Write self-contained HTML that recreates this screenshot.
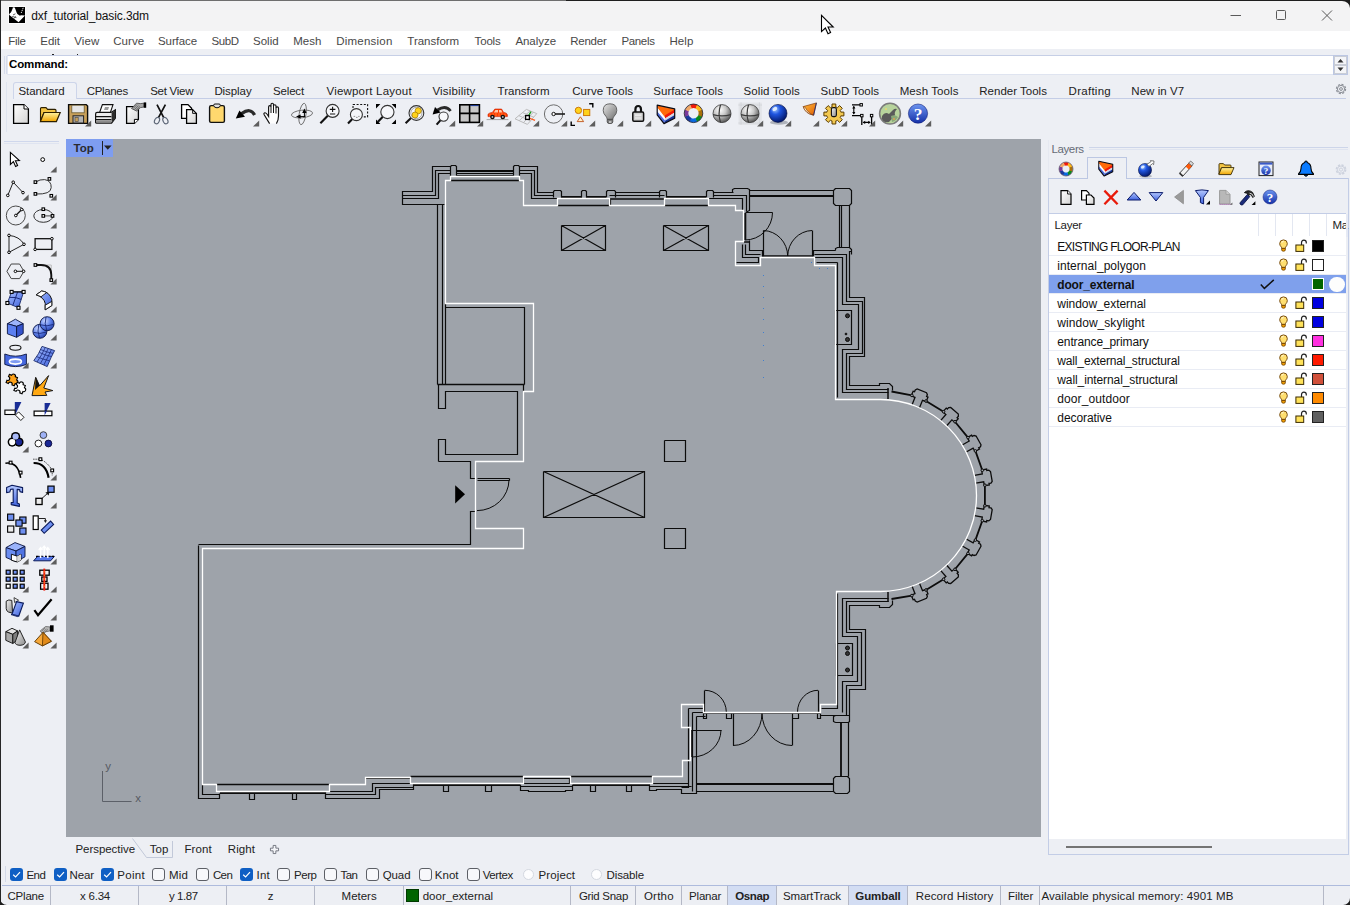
<!DOCTYPE html>
<html lang="en"><head><meta charset="utf-8"><title>dxf_tutorial_basic.3dm</title>
<style>
html,body{margin:0;padding:0;background:#fff;}
#app{position:relative;width:1351px;height:905px;overflow:hidden;background:#edeff4;font-family:"Liberation Sans",sans-serif;font-size:12.3px;color:#222;}
#app *{box-sizing:border-box;}
.a{position:absolute;}
.t{position:absolute;white-space:pre;line-height:16px;height:16px;}
.hl{position:absolute;height:1px;}
.vl{position:absolute;width:1px;}
svg{position:absolute;overflow:visible;}
.cb{position:absolute;width:13px;height:13px;border-radius:3px;top:868px;}
.cb.on{background:#0f5fc4;}
.cb.off{background:#f7f8fb;border:1px solid #5c5f66;}
.rd{position:absolute;width:11px;height:11px;border-radius:50%;top:869px;background:#fdfdfe;border:1px solid #d4d8e0;}
.sep{position:absolute;top:886px;width:1px;height:19px;background:#b4b8c6;}
.lrow{position:absolute;left:1049px;width:1297px;height:1px;background:#e9ecf4;}
.sw{position:absolute;left:1312px;width:12px;height:12px;border:1px solid #222;}

</style></head>
<body>
<div id="app">
<!-- window frame -->
<div class="a" style="left:0;top:0;width:1350px;height:31px;background:#f3f3f4;"></div>
<div class="a" style="left:0;top:31px;width:1350px;height:18px;background:#ffffff;"></div>
<!-- command area -->
<div class="a" style="left:7px;top:55px;width:1326px;height:20px;background:#fff;border:1px solid #c6cfe6;border-right:none;border-left-color:#e4e8f2;border-bottom-color:#dfe4f0;"></div><div class="vl" style="left:4px;top:56px;height:18px;background:#d6dcec;"></div><div class="vl" style="left:6px;top:56px;height:18px;background:#d6dcec;"></div><div class="a" style="left:52px;top:54px;width:2px;height:1px;background:#222;"></div><div class="a" style="left:77px;top:54px;width:1px;height:1px;background:#222;"></div>
<div class="a" style="left:1333px;top:55px;width:15px;height:20px;background:#fff;border:1px solid #bcc7e3;"></div>
<svg style="left:1334px;top:56px" width="13" height="18" viewBox="0 0 13 18"><rect x="0.5" y="0.5" width="12" height="8" fill="#f4f5f8" stroke="#c9cdd6"/><rect x="0.5" y="9.5" width="12" height="8" fill="#f4f5f8" stroke="#c9cdd6"/><path d="M3.5 6.5 L6.5 3 L9.5 6.5Z M3.5 11.5 L6.5 15 L9.5 11.5Z" fill="#333"/></svg>
<!-- toolbar tab strip -->
<div class="hl" style="left:76px;top:98px;width:1270px;background:#c4cde6;"></div>
<div class="a" style="left:13px;top:82px;width:64px;height:17px;border:1px solid #cdd5ea;border-bottom:none;border-radius:3px 3px 0 0;background:#eff1f6;"></div>
<div class="a" style="left:6px;top:82px;width:1px;height:50px;background:#dfe4ef;"></div>
<svg style="left:1334px;top:82px" width="14" height="14" viewBox="0 0 14 14"><circle cx="7" cy="7" r="4.6" fill="none" stroke="#8a8e96" stroke-width="1.1" stroke-dasharray="2.2 1.4"/><circle cx="7" cy="7" r="3.6" fill="none" stroke="#8a8e96" stroke-width="1"/><circle cx="7" cy="7" r="1.4" fill="none" stroke="#8a8e96" stroke-width="1"/></svg>
<!-- window controls -->
<svg style="left:1225px;top:5px" width="115" height="22" viewBox="0 0 115 22"><g stroke="#5a5a5a" stroke-width="1" fill="none"><path d="M5.5 10.5 H16"/><rect x="51.5" y="5.5" width="9" height="9" rx="1"/><path d="M97 5.5 L107 15.5 M107 5.5 L97 15.5"/></g></svg>
<!-- left toolbar separator -->
<div class="hl" style="left:4px;top:141px;width:55px;background:#cfd7ec;"></div>
<div class="hl" style="left:4px;top:143px;width:55px;background:#dfe4f1;"></div>
<!-- viewport -->
<div class="a" style="left:66px;top:139px;width:975px;height:698px;background:#9ea3aa;"></div>
<div class="a" style="left:66px;top:139px;width:47px;height:18px;background:#7e9df0;"></div>
<div class="a" style="left:102px;top:141px;width:1px;height:14px;background:#222;"></div>
<svg style="left:103px;top:145px" width="10" height="6" viewBox="0 0 10 6"><path d="M1 0.5 H8.6 L4.8 4.8Z" fill="#222"/></svg>
<!-- viewport tabs -->
<svg style="left:130px;top:838px" width="50" height="22" viewBox="0 0 50 22"><path d="M2.5 0.5 L16.5 19.5 H42.5 V3" fill="none" stroke="#c2c9d9" stroke-width="1"/></svg>
<svg style="left:270px;top:844.5px" width="9" height="9" viewBox="0 0 10 10"><path d="M3.5 0.5 H6.5 V3.5 H9.5 V6.5 H6.5 V9.5 H3.5 V6.5 H0.5 V3.5 H3.5Z" fill="#f4f5f8" stroke="#6a6e78" stroke-width="1"/></svg>
<!-- osnap row -->
<div class="a" style="left:5px;top:866px;width:1px;height:16px;background:#d3d9e8;"></div>
<div class="cb on" style="left:10px"><svg width="13" height="13" viewBox="0 0 13 13" style="left:0;top:0"><path d="M3.2 6.8 L5.6 9 L10 4.2" fill="none" stroke="#fff" stroke-width="1.2"/></svg></div>
<div class="cb on" style="left:54px"><svg width="13" height="13" viewBox="0 0 13 13" style="left:0;top:0"><path d="M3.2 6.8 L5.6 9 L10 4.2" fill="none" stroke="#fff" stroke-width="1.2"/></svg></div>
<div class="cb on" style="left:101px"><svg width="13" height="13" viewBox="0 0 13 13" style="left:0;top:0"><path d="M3.2 6.8 L5.6 9 L10 4.2" fill="none" stroke="#fff" stroke-width="1.2"/></svg></div>
<div class="cb off" style="left:152px"></div>
<div class="cb off" style="left:196px"></div>
<div class="cb on" style="left:240px"><svg width="13" height="13" viewBox="0 0 13 13" style="left:0;top:0"><path d="M3.2 6.8 L5.6 9 L10 4.2" fill="none" stroke="#fff" stroke-width="1.2"/></svg></div>
<div class="cb off" style="left:277px"></div>
<div class="cb off" style="left:324px"></div>
<div class="cb off" style="left:366px"></div>
<div class="cb off" style="left:418.5px"></div>
<div class="cb off" style="left:466.5px"></div>
<div class="rd" style="left:523px"></div>
<div class="rd" style="left:591px"></div>
<div class="hl" style="left:2px;top:885px;width:1348px;background:#aebbdd;"></div>
<div class="a" style="left:728px;top:886px;width:48px;height:19px;background:#d3ddf3;"></div>
<div class="a" style="left:849px;top:886px;width:58px;height:19px;background:#d3ddf3;"></div>
<div class="sep" style="left:50px"></div>
<div class="sep" style="left:138px"></div>
<div class="sep" style="left:226px"></div>
<div class="sep" style="left:314px"></div>
<div class="sep" style="left:403px"></div>
<div class="sep" style="left:570px"></div>
<div class="sep" style="left:635px"></div>
<div class="sep" style="left:681px"></div>
<div class="sep" style="left:727px"></div>
<div class="sep" style="left:776px"></div>
<div class="sep" style="left:848px"></div>
<div class="sep" style="left:907px"></div>
<div class="sep" style="left:1000px"></div>
<div class="sep" style="left:1039px"></div>
<div class="sep" style="left:1323px"></div>
<div class="a" style="left:406px;top:889px;width:13px;height:13px;background:#006400;border:1px solid #003a00;"></div>
<div class="vl" style="left:1048px;top:140px;height:38px;background:#e6e9f1;"></div><div class="vl" style="left:1048px;top:178px;height:677px;background:#c3cde6;"></div>
<div class="hl" style="left:1089px;top:147px;width:259px;background:#cdd5e9;"></div>
<div class="hl" style="left:1089px;top:149px;width:259px;background:#dfe4f0;"></div>
<div class="hl" style="left:1048px;top:178px;width:301px;background:#bcc7e3;"></div>
<div class="a" style="left:1087px;top:157px;width:40px;height:22px;border:1px solid #bcc7e3;border-bottom:none;background:#edeff4;"></div>
<div class="vl" style="left:1348px;top:178px;height:677px;background:#c3cde6;"></div>
<div class="hl" style="left:1048px;top:854px;width:301px;background:#c3cde6;"></div>
<div class="a" style="left:1049px;top:213px;width:297px;height:626px;background:#fff;border-top:1px solid #c3cde6;"></div>
<div class="vl" style="left:1258px;top:214px;height:22px;background:#e3e7f1;"></div>
<div class="vl" style="left:1275px;top:214px;height:22px;background:#e3e7f1;"></div>
<div class="vl" style="left:1292px;top:214px;height:22px;background:#e3e7f1;"></div>
<div class="vl" style="left:1309px;top:214px;height:22px;background:#e3e7f1;"></div>
<div class="vl" style="left:1326px;top:214px;height:22px;background:#e3e7f1;"></div>
<div class="lrow" style="top:255px;width:297px"></div>
<div class="lrow" style="top:274px;width:297px"></div>
<div class="lrow" style="top:293px;width:297px"></div>
<div class="lrow" style="top:312px;width:297px"></div>
<div class="lrow" style="top:331px;width:297px"></div>
<div class="lrow" style="top:350px;width:297px"></div>
<div class="lrow" style="top:369px;width:297px"></div>
<div class="lrow" style="top:388px;width:297px"></div>
<div class="lrow" style="top:407px;width:297px"></div>
<div class="lrow" style="top:426px;width:297px"></div>
<div class="a" style="left:1049px;top:275px;width:297px;height:18px;background:#7fa0ec;"></div>
<div class="a" style="left:1066px;top:846px;width:146px;height:2px;background:#747474;"></div>
<div class="sw" style="top:240px;background:#000000"></div>
<div class="sw" style="top:259px;background:#ffffff"></div>
<div class="sw" style="top:278px;background:#006400;border-color:#fff"></div>
<div class="sw" style="top:297px;background:#0000e0"></div>
<div class="sw" style="top:316px;background:#0000e0"></div>
<div class="sw" style="top:335px;background:#ff30e0"></div>
<div class="sw" style="top:354px;background:#ff1a00"></div>
<div class="sw" style="top:373px;background:#d0503a"></div>
<div class="sw" style="top:392px;background:#ff8a00"></div>
<div class="sw" style="top:411px;background:#606060"></div>
<div class="a" style="left:1329px;top:276.5px;width:15.5px;height:15.5px;border-radius:50%;background:#fdfdfd;"></div>
<svg style="left:1260px;top:279px" width="15" height="11" viewBox="0 0 15 11"><path d="M0.8 5.4 L4.4 9.4 L13.8 0.9" fill="none" stroke="#111" stroke-width="1.5"/></svg>
<div class="a" style="left:0;top:0;width:566px;height:1px;background:#6e6e6e;"></div><div class="a" style="left:566px;top:0;width:784px;height:1px;background:#1e1e1e;"></div>
<div class="a" style="left:0;top:0;width:1px;height:905px;background:#262626;"></div>
<svg style="left:1342px;top:0" width="8" height="8" viewBox="0 0 8 8"><path d="M0 0 H8 V8 A8 7 0 0 0 0 1 Z" fill="#1c1c1c"/></svg>
<svg style="left:1343px;top:898px" width="7" height="7" viewBox="0 0 7 7"><path d="M7 0 V7 H0 A7 7 0 0 0 7 0Z" fill="#1c1c1c"/></svg>
<svg style="left:0;top:898px" width="7" height="7" viewBox="0 0 7 7"><path d="M0 0 V7 H7 A7 7 0 0 1 0 0Z" fill="#1c1c1c"/></svg>
<div class="a" style="left:1350px;top:0;width:1px;height:905px;background:#fff;"></div>
<!-- app icon -->
<svg style="left:8px;top:6px" width="18" height="18" viewBox="0 0 18 18"><rect x="0.3" y="0.3" width="17.4" height="17.4" fill="#fff"/><rect x="1" y="1" width="16" height="16" fill="#000"/><path d="M1 8.8 L3.2 5 Q4.4 2.6 4.6 1.2 L6.8 1.4 L8.6 6.4 L9.4 8 L11.6 9.6 L13.4 9.2 L17 9.4 L10.6 16.2 Z" fill="#fff"/><path d="M4.4 1.2 Q3.6 5 2.2 6.8" fill="none" stroke="#000" stroke-width="0.9"/><path d="M5 9 L7.4 7.8 M4.2 10.4 L8.4 11.6 M6 12.6 L7.6 10.4" stroke="#333" stroke-width="0.8"/><path d="M15.2 1.8 L13.2 7" stroke="#fff" stroke-width="0.9" stroke-dasharray="1.4 0.8"/><path d="M11 8.6 Q12.6 9.4 13.4 7.6" fill="none" stroke="#000" stroke-width="0.9"/></svg>
<!-- mouse cursor -->
<svg style="left:818px;top:12px" width="20" height="26" viewBox="0 0 20 26"><path d="M3.5 3.4 V19.6 L7.4 16 L10 21.8 L12.6 20.6 L10 15 H15.2 Z" fill="#fff" stroke="#000" stroke-width="1.1" stroke-linejoin="miter"/></svg>

<svg id="plan" style="left:0;top:0" width="1351" height="905" viewBox="0 0 1351 905">
<path d="M102.5 771 V801.5 H131.6" fill="none" stroke="#5c6068" stroke-width="1"/>
<rect x="763" y="275" width="1" height="1" fill="#3f7fd0"/><rect x="763" y="286" width="1" height="1" fill="#3f7fd0"/><rect x="763" y="297" width="1" height="1" fill="#3f7fd0"/><rect x="763" y="308" width="1" height="1" fill="#3f7fd0"/><rect x="763" y="319" width="1" height="1" fill="#3f7fd0"/><rect x="763" y="332" width="1" height="1" fill="#3f7fd0"/><rect x="763" y="345" width="1" height="1" fill="#3f7fd0"/><rect x="763" y="360" width="1" height="1" fill="#3f7fd0"/><rect x="763" y="377" width="1" height="1" fill="#3f7fd0"/><rect x="811" y="262" width="1" height="1" fill="#3f7fd0"/><rect x="819" y="268" width="1" height="1" fill="#3f7fd0"/><rect x="827" y="268" width="1" height="1" fill="#3f7fd0"/>
<g fill="none" stroke="#0c0c0c" stroke-linejoin="miter">
<path stroke-width="1.2" d="M444.5 204.5 L402.5 204.5 L402.5 191.5 L432.5 191.5 L432.5 166.5 L450.5 166.5 M402.5 195.5 L435.5 195.5 L435.5 170.5 L450.5 170.5 M402.5 198.5 L438.5 198.5 L438.5 173.5 L450.5 173.5 M450.5 176.5 L450.5 166.5 L451.5 165.5 L455.5 165.5 L456.5 166.5 L456.5 176.5 M513.5 176.5 L513.5 166.5 L514.5 165.5 L518.5 165.5 L519.5 166.5 L519.5 176.5 M456.5 173.5 L513.5 173.5 M456.5 175.5 L513.5 175.5 M519.5 166.5 L537.5 166.5 L537.5 192.5 L553.5 192.5 M519.5 170.5 L534.5 170.5 L534.5 195.5 L553.5 195.5 M519.5 173.5 L531.5 173.5 L531.5 198.5 L557.5 198.5 M437.5 204.5 L437.5 384.5 M442.5 204.5 L442.5 384.5 M553.5 197.5 L553.5 191.5 L554.5 190.5 L560.5 190.5 L561.5 191.5 L561.5 197.5 M581.5 197.5 L581.5 191.5 L582.5 190.5 L585.5 190.5 L586.5 191.5 L586.5 197.5 M606.5 197.5 L606.5 191.5 L607.5 190.5 L614.5 190.5 L615.5 191.5 L615.5 197.5 M659.5 197.5 L659.5 191.5 L660.5 190.5 L665.5 190.5 L666.5 191.5 L666.5 197.5 M706.5 197.5 L706.5 191.5 L707.5 190.5 L712.5 190.5 L713.5 191.5 L713.5 197.5 M615.5 192.5 L659.5 192.5 M609.5 195.5 L664.5 195.5 M609.5 198.5 L609.5 205.5 M610.5 198.5 L610.5 205.5 M713.5 192.5 L733.5 192.5 M713.5 195.5 L746.5 195.5 L746.5 211.5 M708.5 198.5 L742.5 198.5 L742.5 210.5 M734.5 188.5 L747.5 188.5 L749.5 189.5 L749.5 210.5 L747.5 211.5 L746.5 211.5 M734.5 188.5 L732.5 189.5 L732.5 192.5 M749.5 190.5 L833.5 190.5 M835.5 188.5 L849.5 188.5 L851.5 190.5 L851.5 203.5 L849.5 205.5 L835.5 205.5 L833.5 203.5 L833.5 190.5 L835.5 188.5 M839.5 205.5 L839.5 247.5 M841.5 205.5 L841.5 247.5 M849.5 205.5 L849.5 247.5 M835.5 250.5 L835.5 248.5 L837.5 247.5 L849.5 247.5 L851.5 249.5 L851.5 254.5 M745.5 212.5 L772.5 212.5 M763.5 256.5 L763.5 230.5 M812.5 256.5 L812.5 230.5 M742.5 244.5 L742.5 257.5 L758.5 257.5 L758.5 262.5 L736.5 262.5 M745.5 244.5 L745.5 254.5 L760.5 254.5 M749.5 240.5 L749.5 250.5 L762.5 250.5 L762.5 256.5 M813.5 256.5 L813.5 250.5 L835.5 250.5 M851.5 251.5 L849.5 251.5 L849.5 297.5 L864.5 297.5 L864.5 356.5 L849.5 356.5 L849.5 385.5 L879.5 385.5 L879.5 383.5 L889.5 383.5 L892.5 386.5 L892.5 390.5 M814.5 254.5 L846.5 254.5 L846.5 301.5 L862.5 301.5 L862.5 353.5 L846.5 353.5 L846.5 389.5 L888.5 389.5 M814.5 257.5 L842.5 257.5 L842.5 304.5 L858.5 304.5 L858.5 349.5 L842.5 349.5 L842.5 392.5 L888.5 392.5 M837.5 262.5 L837.5 397.5 M837.5 262.5 L816.5 262.5 M835.5 310.5 L851.5 310.5 L851.5 344.5 L835.5 344.5 L835.5 310.5 M892.5 600.5 L892.5 604.5 L889.5 607.5 L879.5 607.5 L879.5 605.5 L849.5 605.5 L849.5 629.5 L865.5 629.5 L865.5 689.5 L849.5 689.5 L849.5 716.5 M888.5 601.5 L846.5 601.5 L846.5 632.5 L861.5 632.5 L861.5 685.5 L846.5 685.5 L846.5 715.5 L820.5 715.5 M888.5 598.5 L842.5 598.5 L842.5 636.5 L857.5 636.5 L857.5 681.5 L842.5 681.5 L842.5 712.5 M837.5 593.5 L837.5 708.5 L821.5 708.5 M836.5 643.5 L852.5 643.5 L852.5 675.5 L836.5 675.5 L836.5 643.5 M835.5 722.5 L833.5 721.5 L833.5 716.5 L835.5 715.5 L849.5 715.5 L849.5 721.5 L848.5 722.5 L835.5 722.5 M848.5 722.5 L848.5 776.5 M835.5 776.5 L847.5 776.5 L849.5 778.5 L849.5 791.5 L847.5 793.5 L835.5 793.5 L833.5 791.5 L833.5 778.5 L835.5 776.5 M696.5 791.5 L833.5 791.5 M688.5 708.5 L688.5 787.5 L681.5 787.5 M692.5 712.5 L692.5 791.5 M696.5 716.5 L696.5 793.5 L681.5 793.5 L681.5 790.5 M688.5 708.5 L703.5 708.5 M692.5 712.5 L703.5 712.5 M696.5 716.5 L705.5 716.5 M726.5 713.5 L726.5 718.5 L731.5 718.5 L731.5 713.5 M792.5 713.5 L792.5 718.5 L798.5 718.5 L798.5 713.5 M703.5 713.5 L703.5 718.5 L706.5 718.5 L706.5 713.5 M817.5 713.5 L817.5 718.5 L820.5 718.5 L820.5 713.5 M704.5 712.5 L704.5 690.5 M818.5 712.5 L818.5 690.5 M733.5 713.5 L733.5 745.5 M792.5 713.5 L792.5 745.5 M692.5 730.5 L721.5 730.5 M198.5 545.5 L198.5 798.5 L219.5 798.5 L219.5 793.5 M202.5 784.5 L202.5 794.5 L219.5 794.5 M249.5 793.5 L249.5 799.5 L254.5 799.5 L254.5 793.5 M292.5 793.5 L292.5 799.5 L296.5 799.5 L296.5 793.5 M329.5 791.5 L372.5 791.5 L372.5 783.5 L410.5 783.5 M325.5 791.5 L325.5 794.5 L375.5 794.5 L375.5 787.5 L413.5 787.5 M325.5 794.5 L325.5 798.5 L379.5 798.5 L379.5 789.5 L413.5 789.5 L413.5 784.5 M365.5 778.5 L410.5 778.5 M443.5 785.5 L443.5 791.5 L448.5 791.5 L448.5 785.5 M485.5 785.5 L485.5 791.5 L491.5 791.5 L491.5 785.5 M590.5 785.5 L590.5 791.5 L595.5 791.5 L595.5 785.5 M626.5 785.5 L626.5 791.5 L631.5 791.5 L631.5 785.5 M523.5 778.5 L569.5 778.5 L569.5 783.5 L523.5 783.5 L523.5 778.5 M520.5 784.5 L520.5 786.5 L572.5 786.5 L572.5 784.5 M520.5 786.5 L520.5 790.5 L528.5 790.5 L528.5 791.5 L565.5 791.5 L565.5 790.5 L572.5 790.5 L572.5 786.5 M652.5 783.5 L688.5 783.5 L688.5 776.5 M649.5 784.5 L649.5 786.5 L691.5 786.5 M649.5 786.5 L649.5 790.5 L656.5 790.5 L656.5 789.5 L681.5 789.5 L681.5 793.5 M198.5 544.5 L470.5 544.5 L470.5 511.5 L475.5 511.5 M438.5 461.5 L470.5 461.5 L470.5 478.5 L475.5 478.5 M477.5 478.5 L509.5 478.5 M477.5 480.5 L509.5 480.5 M509.5 478.5 L509.5 480.5 M445.5 303.5 L445.5 384.5 M445.5 307.5 L524.5 307.5 L524.5 384.5 M523.5 384.5 L523.5 391.5 M438.5 384.5 L438.5 408.5 L445.5 408.5 L445.5 391.5 L517.5 391.5 L517.5 454.5 L445.5 454.5 L445.5 439.5 L438.5 439.5 L438.5 461.5 M561.5 225.5 L605.5 225.5 L605.5 250.5 L561.5 250.5 L561.5 225.5 M561.5 225.5 L605.5 250.5 M561.5 250.5 L605.5 225.5 M663.5 225.5 L708.5 225.5 L708.5 250.5 L663.5 250.5 L663.5 225.5 M663.5 225.5 L708.5 250.5 M663.5 250.5 L708.5 225.5 M543.5 471.5 L644.5 471.5 L644.5 517.5 L543.5 517.5 L543.5 471.5 M543.5 471.5 L644.5 517.5 M543.5 517.5 L644.5 471.5 M664.5 440.5 L685.5 440.5 L685.5 461.5 L664.5 461.5 L664.5 440.5 M664.5 528.5 L685.5 528.5 L685.5 548.5 L664.5 548.5 L664.5 528.5"/>
<path stroke-width="2" d="M456 171 L514 171 M561 197 L582 197 M586 197 L606 197 M666 197 L706 197 M749 196 L834 196 M745.3 213 L745.3 240 M696 784 L833 784 M692 730 L692 757"/>
<path stroke-width="1.3" d="M450.5 180.5 L519.5 180.5 M557.5 205.5 L609.5 205.5 M664.5 205.5 L708.5 205.5 M216.5 784.5 L329.5 784.5 M410.5 776.5 L523.5 776.5 M570.5 776.5 L652.5 776.5 M437.5 384.5 L524.5 384.5 M919.5 407.7 L922.5 400.3 L926.2 401.7 L928 397.1 L926.6 396.5 L927.4 394.7 L926.5 392.7 L917.2 389 L915.3 389.9 L914.5 391.7 L913.1 391.2 L911.3 395.8 L915 397.3 L912.1 404.8 M946.7 425.8 L951.9 419.8 L954.9 422.4 L958.2 418.7 L957.1 417.7 L958.4 416.2 L958.3 414 L950.7 407.5 L948.6 407.6 L947.3 409.1 L946.2 408.1 L942.9 411.9 L945.9 414.5 L940.6 420.6 M966.2 452 L973.1 448.1 L975.1 451.5 L979.5 449.1 L978.7 447.8 L980.5 446.8 L981 444.8 L976.1 436 L974.1 435.5 L972.3 436.4 L971.6 435.1 L967.3 437.6 L969.2 441.1 L962.2 445 M975.8 483.1 L983.7 481.8 L984.3 485.7 L989.3 484.9 L989 483.4 L991 483.1 L992.2 481.3 L990.5 471.5 L988.8 470.2 L986.8 470.6 L986.6 469.1 L981.6 470 L982.3 473.9 L974.4 475.3 M974.4 515.7 L982.3 517.1 L981.6 521 L986.6 521.9 L986.8 520.4 L988.8 520.8 L990.5 519.5 L992.2 509.7 L991 507.9 L989 507.6 L989.3 506.1 L984.3 505.3 L983.7 509.2 L975.8 507.9 M962.2 546 L969.2 549.9 L967.3 553.4 L971.6 555.9 L972.3 554.6 L974.1 555.5 L976.1 555 L981 546.2 L980.5 544.2 L978.7 543.2 L979.5 541.9 L975.1 539.5 L973.1 542.9 L966.2 539 M940.6 570.4 L945.9 576.5 L942.9 579.1 L946.2 582.9 L947.3 581.9 L948.6 583.4 L950.7 583.5 L958.3 577 L958.4 574.8 L957.1 573.3 L958.2 572.3 L954.9 568.6 L951.9 571.2 L946.7 565.2 M912.1 586.2 L915 593.7 L911.3 595.2 L913.1 599.8 L914.5 599.3 L915.3 601.1 L917.2 602 L926.5 598.3 L927.4 596.3 L926.6 594.5 L928 593.9 L926.2 589.3 L922.5 590.7 L919.5 583.3"/>
<path stroke-width="1.6" d="M610 199 L664 199 M762 256 L813 256 M744 242 L750 242"/>
<path stroke-width="1.5" d="M888 388 L888 399 M888 592 L888 602 M703 713 L820 713"/>
<path stroke-width="1.8" d="M841 722 L841 776 M220 793 L326 793 M413 785 L520 785 M573 785 L650 785 M891.5 391.5 L911.9 395.4 M926 401 L943.6 411.7 M955 421.7 L968 437.6 M975.4 450.9 L982.3 470.3 M984.9 485.2 L984.9 505.8 M982.3 520.7 L975.4 540.1 M968 553.4 L955 569.3 M943.6 579.3 L926 590 M911.9 595.6 L891.5 599"/>
<g stroke-width="1"><path d="M772.5 212.5 A27.5 27.5 0 0 1 745 240" /><path d="M763.5 230.5 A25 26 0 0 1 787.7 256" /><path d="M812 230.5 A25 26 0 0 0 787.7 256" /><circle cx="847.5" cy="315.8" r="2" fill="#333"/><circle cx="847.5" cy="339.5" r="2" fill="#333"/><circle cx="846" cy="334" r="0.9" fill="#333"/><circle cx="847.5" cy="648" r="2" fill="#333"/><circle cx="847.5" cy="653.5" r="2" fill="#333"/><circle cx="847.5" cy="670" r="2" fill="#333"/><path d="M704.7 690.3 A21.6 21.7 0 0 1 726.3 712" /><path d="M818 690.3 A20.5 21.7 0 0 0 797.5 712" /><path d="M733 745.5 A29 32.5 0 0 0 762 713" /><path d="M792 745.5 A30 32.5 0 0 1 762 713" /><path d="M721 730 A28.8 27 0 0 1 692.2 757" /><path d="M509 480 A32 31 0 0 1 477 510.6" /><path d="M455.2 485.2 L455.2 503.5 L465 494.3Z" fill="#000" stroke="none"/><circle cx="926.0" cy="401.0" r="1.3" fill="#9ea3aa"/><circle cx="911.9" cy="395.4" r="1.3" fill="#9ea3aa"/><circle cx="955.0" cy="421.7" r="1.3" fill="#9ea3aa"/><circle cx="943.6" cy="411.7" r="1.3" fill="#9ea3aa"/><circle cx="975.4" cy="450.9" r="1.3" fill="#9ea3aa"/><circle cx="968.0" cy="437.6" r="1.3" fill="#9ea3aa"/><circle cx="984.9" cy="485.2" r="1.3" fill="#9ea3aa"/><circle cx="982.3" cy="470.3" r="1.3" fill="#9ea3aa"/><circle cx="982.3" cy="520.7" r="1.3" fill="#9ea3aa"/><circle cx="984.9" cy="505.8" r="1.3" fill="#9ea3aa"/><circle cx="968.0" cy="553.4" r="1.3" fill="#9ea3aa"/><circle cx="975.4" cy="540.1" r="1.3" fill="#9ea3aa"/><circle cx="943.6" cy="579.3" r="1.3" fill="#9ea3aa"/><circle cx="955.0" cy="569.3" r="1.3" fill="#9ea3aa"/><circle cx="911.9" cy="595.6" r="1.3" fill="#9ea3aa"/><circle cx="926.0" cy="590.0" r="1.3" fill="#9ea3aa"/></g>
</g>
<path d="M880.5 399.5 L835.5 399.5 L835.5 265.5 L814.5 265.5 L814.5 257.5 L760.5 257.5 L760.5 265.5 L735.5 265.5 L735.5 241.5 L743.5 241.5 L743.5 210.5 L735.5 210.5 L735.5 205.5 L708.5 205.5 L708.5 198.5 L664.5 198.5 L664.5 205.5 L609.5 205.5 L609.5 198.5 L557.5 198.5 L557.5 205.5 L523.5 205.5 L523.5 180.5 L519.5 180.5 L519.5 176.5 L450.5 176.5 L450.5 180.5 L445.5 180.5 L445.5 303.5 L533.5 303.5 L533.5 391.5 L523.5 391.5 L523.5 461.5 L475.5 461.5 L475.5 528.5 L523.5 528.5 L523.5 548.5 L202.5 548.5 L202.5 784.5 L216.5 784.5 L216.5 791.5 L329.5 791.5 L329.5 784.5 L365.5 784.5 L365.5 777.5 L410.5 777.5 L410.5 783.5 L523.5 783.5 L523.5 776.5 L570.5 776.5 L570.5 783.5 L652.5 783.5 L652.5 776.5 L682.5 776.5 L682.5 760.5 L690.5 760.5 L690.5 727.5 L681.5 727.5 L681.5 704.5 L703.5 704.5 L703.5 712.5 L820.5 712.5 L820.5 704.5 L836.5 704.5 L836.5 591.5 L880.5 591.5 A96 96 0 0 0 880.5 399.5" fill="none" stroke="#ffffff" stroke-width="1.3" stroke-linejoin="miter"/>
</svg>

<svg width="0" height="0" style="left:0;top:0"><defs>
<linearGradient id="gPage" x1="0" y1="0" x2="1" y2="1"><stop offset="0" stop-color="#ffffff"/><stop offset="1" stop-color="#d4d4d4"/></linearGradient>
<linearGradient id="gFold" x1="0" y1="0" x2="0" y2="1"><stop offset="0" stop-color="#fff3a0"/><stop offset="1" stop-color="#f0a400"/></linearGradient>
<radialGradient id="gGrey" cx="0.38" cy="0.3" r="0.75"><stop offset="0" stop-color="#ffffff"/><stop offset="0.45" stop-color="#c8c8c8"/><stop offset="1" stop-color="#4a4a4a"/></radialGradient>
<radialGradient id="gBlue" cx="0.35" cy="0.28" r="0.8"><stop offset="0" stop-color="#9cc4ff"/><stop offset="0.35" stop-color="#1f55e0"/><stop offset="1" stop-color="#00105a"/></radialGradient>
<radialGradient id="gBlue2" cx="0.35" cy="0.3" r="0.8"><stop offset="0" stop-color="#c8d6ff"/><stop offset="0.5" stop-color="#5f82ea"/><stop offset="1" stop-color="#2038a0"/></radialGradient>
<linearGradient id="gHelp" x1="0" y1="0" x2="0" y2="1"><stop offset="0" stop-color="#6d95f0"/><stop offset="1" stop-color="#1530a8"/></linearGradient>
<linearGradient id="gCone" x1="0" y1="0" x2="1" y2="1"><stop offset="0" stop-color="#ffc040"/><stop offset="1" stop-color="#e05a00"/></linearGradient>
<linearGradient id="gBulb" x1="0" y1="0" x2="1" y2="1"><stop offset="0" stop-color="#e6e6e6"/><stop offset="1" stop-color="#6e6e6e"/></linearGradient>
<linearGradient id="gBl" x1="0" y1="0" x2="1" y2="1"><stop offset="0" stop-color="#a9c0ff"/><stop offset="1" stop-color="#3b5fdc"/></linearGradient>
<linearGradient id="gBlV" x1="0" y1="0" x2="0" y2="1"><stop offset="0" stop-color="#b4c8ff"/><stop offset="1" stop-color="#3f62dd"/></linearGradient>
<linearGradient id="gGr" x1="0" y1="0" x2="1" y2="1"><stop offset="0" stop-color="#f4f4f4"/><stop offset="1" stop-color="#8c8c8c"/></linearGradient>
</defs></svg>
<svg style="left:9px;top:102px" width="28" height="26" viewBox="0 0 28 26"><path d="M4.6 2.6 H15 L19.4 7 V21.4 H4.6Z" fill="url(#gPage)" stroke="#000" stroke-width="1.3"/><path d="M15 2.6 V7 H19.4" fill="#fff" stroke="#000" stroke-width="1"/></svg>
<svg style="left:37px;top:102px" width="28" height="26" viewBox="0 0 28 26"><path d="M3.5 19 V6.6 Q3.5 5.6 4.5 5.6 H9 L10.6 7.4 H18 Q19 7.4 19 8.4 V10.5 H7Z" fill="#f3c544" stroke="#2d2000" stroke-width="1.1"/><path d="M3.4 19.6 L7 10.5 H23.2 L19.4 19.6Z" fill="url(#gFold)" stroke="#2d2000" stroke-width="1.2"/></svg>
<svg style="left:65px;top:102px" width="28" height="26" viewBox="0 0 28 26"><path d="M3.6 2.6 H21.2 L22.6 4 V21.4 H3.6Z" fill="#c8a05a" stroke="#0a0a0a" stroke-width="1.4"/><rect x="6.8" y="3.2" width="12.4" height="7.6" fill="#e6e6e6" stroke="#6a5a30" stroke-width="0.8"/><rect x="8" y="13.8" width="10.6" height="7.2" fill="#b4b4b4" stroke="#222" stroke-width="1"/><rect x="10" y="15.4" width="3.2" height="4.2" fill="#c8a05a" stroke="#444" stroke-width="0.6"/><path d="M20 24.6 L26.2 18.4 V24.6Z" fill="#5e5e5e"/></svg>
<svg style="left:93px;top:102px" width="28" height="26" viewBox="0 0 28 26"><path d="M6.6 10.5 L9.4 2.6 H20 L17.4 10.5Z" fill="#fdfdfd" stroke="#111" stroke-width="1.1"/><path d="M12 5 h4 l-1 3 h-4z" fill="#9a9a9a"/><path d="M2.6 12 Q2.6 10.4 4.2 10.4 H18 L22.4 7.8 V16 L18.6 21.2 H3.4 Q2.6 21.2 2.6 20.2Z" fill="#ececec" stroke="#111" stroke-width="1.2"/><path d="M18.6 10.8 L22.4 8 V16 L18.6 21Z" fill="#2c2c2c"/><path d="M2.8 14.6 H18.4 M2.8 17.6 H18.4" stroke="#111" stroke-width="1.2"/><path d="M3.2 19.2 H18.2" stroke="#8c8c8c" stroke-width="1.6"/></svg>
<svg style="left:121px;top:102px" width="28" height="26" viewBox="0 0 28 26"><path d="M5.6 4.6 H17.4 V17.4 L13.4 21.4 H5.6Z" fill="url(#gPage)" stroke="#000" stroke-width="1.3"/><path d="M13.4 21.4 V17.4 H17.4" fill="#fff" stroke="#000" stroke-width="1"/><path d="M10.5 6.5 L15.5 1.2 L19.5 1.6 L23 1.2 V5 L19.5 5.6 L15.5 9Z" fill="#a8a8a8" stroke="#444" stroke-width="0.8"/><path d="M12 6.6 L16 2.6 M13.5 7.6 L17.5 3.6 M15 8.2 L19 4.4" stroke="#555" stroke-width="0.7"/><rect x="22.8" y="0.4" width="2.4" height="5.4" fill="#000"/></svg>
<svg style="left:149px;top:102px" width="28" height="26" viewBox="0 0 28 26"><path d="M8 2.6 L14.6 15.4 M16.4 2.6 L9.6 15.4" stroke="#111" stroke-width="1.7" fill="none"/><ellipse cx="8" cy="18.6" rx="2.3" ry="3.4" transform="rotate(28 8 18.6)" fill="none" stroke="#5a6474" stroke-width="1.1"/><ellipse cx="16.4" cy="18.6" rx="2.3" ry="3.4" transform="rotate(-28 16.4 18.6)" fill="none" stroke="#5a6474" stroke-width="1.1"/></svg>
<svg style="left:177px;top:102px" width="28" height="26" viewBox="0 0 28 26"><path d="M4.6 2.6 H11 L14.6 6.2 V16.4 H4.6Z" fill="#fff" stroke="#000" stroke-width="1.3"/><path d="M9.6 7.6 H15.6 L19.4 11.4 V21.4 H9.6Z" fill="url(#gPage)" stroke="#000" stroke-width="1.3"/><path d="M15.6 7.6 V11.4 H19.4" fill="none" stroke="#000" stroke-width="0.9"/></svg>
<svg style="left:205px;top:102px" width="28" height="26" viewBox="0 0 28 26"><path d="M6.2 3.6 H17.8 Q19.4 3.6 19.4 5.2 V19 Q19.4 20.4 18 20.4 H6 Q4.6 20.4 4.6 19 V5.2 Q4.6 3.6 6.2 3.6Z" fill="#ffd86e" stroke="#111" stroke-width="1.4"/><path d="M8.6 3.4 Q8.6 2 10 2 H14 Q15.4 2 15.4 3.4 Q15 5.8 12 5.8 Q9 5.8 8.6 3.4Z" fill="#e2e2e2" stroke="#111" stroke-width="1"/></svg>
<svg style="left:233px;top:102px" width="28" height="26" viewBox="0 0 28 26"><path d="M21.6 13 Q17.5 5.2 8.6 11.6" fill="none" stroke="#2a2a2a" stroke-width="3.2"/><path d="M2.8 16.6 L6.4 8.4 L12 14.8Z" fill="#000"/><path d="M20 24.6 L26.2 18.4 V24.6Z" fill="#5e5e5e"/></svg>
<svg style="left:261px;top:102px" width="28" height="26" viewBox="0 0 28 26"><path d="M8.6 21.6 L3.2 12.8 Q2.4 11.2 3.8 10.8 Q5.2 10.6 7.6 14.4 V5 Q7.6 3.6 8.8 3.6 Q10 3.6 10 5 V2.6 Q10 1.2 11.25 1.2 Q12.5 1.2 12.5 2.6 V4 Q12.5 2.7 13.75 2.7 Q15 2.7 15 4 V6 Q15 4.8 16.25 4.8 Q17.5 4.8 17.5 6 V14 Q17.5 18.5 15.4 21.6" fill="#fdfdfd" stroke="#111" stroke-width="1.15"/><path d="M10 5 V11 M12.5 4 V11 M15 6 V11.5" stroke="#111" stroke-width="1"/></svg>
<svg style="left:289px;top:102px" width="28" height="26" viewBox="0 0 28 26"><ellipse cx="13" cy="12" rx="10.6" ry="3.8" transform="rotate(-6 13 12)" fill="none" stroke="#6a6a6a" stroke-width="0.9"/><ellipse cx="13.6" cy="12" rx="3.4" ry="10.8" transform="rotate(9 13.6 12)" fill="none" stroke="#6a6a6a" stroke-width="0.9"/><path d="M15.4 6.6 L17.6 11 H13.2Z M7 14.6 L11.6 12.4 V16.8Z" fill="#000"/><path d="M15.4 10 V15 M10 14.6 H16" stroke="#000" stroke-width="1"/></svg>
<svg style="left:317px;top:102px" width="28" height="26" viewBox="0 0 28 26"><path d="M11.0 13.5 L3.4 21.2" stroke="#111" stroke-width="2.1" fill="none"/><circle cx="15.6" cy="8.9" r="6.5" fill="#f6f7fa" stroke="#333" stroke-width="1.1"/><path d="M12.8 7.4 H18.4 M15.6 4.8 V10 M13 12 H18.2" stroke="#111" stroke-width="1.1"/></svg>
<svg style="left:345px;top:102px" width="28" height="26" viewBox="0 0 28 26"><rect x="8" y="2.5" width="14.6" height="12.4" fill="none" stroke="#111" stroke-width="1.1" stroke-dasharray="2 1.6"/><path d="M7.3 16.9 L3 21.4" stroke="#111" stroke-width="2.1" fill="none"/><circle cx="11.4" cy="12.6" r="6" fill="#f6f7fa" stroke="#333" stroke-width="1.1"/><path d="M8.6 14.4 h1.6 M11 15.4 h1.6 M13.2 14.4 h1.4" stroke="#888" stroke-width="0.9"/></svg>
<svg style="left:373px;top:102px" width="28" height="26" viewBox="0 0 28 26"><path d="M3 2 H7.4 L3 6.4Z M23 2 H18.6 L23 6.4Z M3 22 H7.4 L3 17.6Z M23 22 H18.6 L23 17.6Z" fill="#000"/><path d="M9.8 14.8 L5 19.8" stroke="#111" stroke-width="2.1" fill="none"/><circle cx="14.4" cy="10" r="6.6" fill="#f6f7fa" stroke="#333" stroke-width="1.1"/></svg>
<svg style="left:401px;top:102px" width="28" height="26" viewBox="0 0 28 26"><path d="M10.0 16.1 L4.6 21.2" stroke="#111" stroke-width="2.1" fill="none"/><circle cx="15.4" cy="11" r="7.4" fill="#f6f7fa" stroke="#333" stroke-width="1.1"/><circle cx="15.4" cy="11" r="5.6" fill="none" stroke="#888" stroke-width="0.7"/><circle cx="17.2" cy="8.8" r="3.1" fill="#ffd21a" stroke="#a07800" stroke-width="0.7"/><circle cx="14" cy="13" r="3" fill="#ffd21a" stroke="#a07800" stroke-width="0.7"/></svg>
<svg style="left:429px;top:102px" width="28" height="26" viewBox="0 0 28 26"><path d="M21.6 9 Q16.5 2.4 8.6 8" fill="none" stroke="#2a2a2a" stroke-width="2.8"/><path d="M3.6 12.6 L6 5 L11.6 10.4Z" fill="#000"/><path d="M11.6 18.1 L7.6 22.6" stroke="#111" stroke-width="2.1" fill="none"/><circle cx="14.6" cy="14.6" r="4.6" fill="#f6f7fa" stroke="#333" stroke-width="1.1"/><path d="M20 24.6 L26.2 18.4 V24.6Z" fill="#5e5e5e"/></svg>
<svg style="left:457px;top:102px" width="28" height="26" viewBox="0 0 28 26"><rect x="2.8" y="2.8" width="19.6" height="17.6" fill="#c6c6c6" stroke="#000" stroke-width="1.6"/><path d="M12.6 2.8 V20.4 M2.8 11.4 H22.4" stroke="#000" stroke-width="1.6"/><path d="M13.4 3.6 h8.2" stroke="#1a3a9a" stroke-width="1"/><path d="M20 24.6 L26.2 18.4 V24.6Z" fill="#5e5e5e"/></svg>
<svg style="left:485px;top:102px" width="28" height="26" viewBox="0 0 28 26"><path d="M1.6 17.6 H23.4" stroke="#a6a6a6" stroke-width="1"/><path d="M3 14.6 V12.2 Q4.4 10.6 7.4 10.4 L9.8 7 H16.6 L18.6 10.4 Q22 10.8 22.4 12.8 V14.6Z" fill="#ff3c00" stroke="#c81e00" stroke-width="0.6"/><path d="M10.4 8 H13 V10.4 H8.8Z M14 8 H16.2 L17.4 10.4 H14Z" fill="#ffc9a8"/><path d="M5 11.4 v3 M8 11 v3.4 M11 11 v3.4 M14 11 v3.4 M17 11 v3.4 M20 11.4 v3" stroke="#ff8a3a" stroke-width="0.8"/><circle cx="7.4" cy="15" r="2.3" fill="#111"/><circle cx="17.8" cy="15" r="2.3" fill="#111"/><circle cx="7.4" cy="15" r="0.9" fill="#bbb"/><circle cx="17.8" cy="15" r="0.9" fill="#bbb"/><path d="M20 24.6 L26.2 18.4 V24.6Z" fill="#5e5e5e"/></svg>
<svg style="left:513px;top:102px" width="28" height="26" viewBox="0 0 28 26"><g stroke="#b4b4b4" stroke-width="0.9" fill="none"><path d="M2 16.8 L13.4 7.4 L23.8 11.6 L14.4 22.4Z"/><path d="M5.8 13.6 L17.6 19 M9.6 10.6 L20.8 15.2 M6.2 18.6 L17 9 M10.4 20.6 L20.4 10.2"/></g><path d="M15 14.6 L18 9.6" stroke="#1a9a1a" stroke-width="1.3"/><path d="M16 16 L22 18.4" stroke="#ff5a1a" stroke-width="1.3"/><rect x="12.6" y="13.6" width="3.8" height="3.8" fill="#fff" stroke="#000" stroke-width="1.3"/><path d="M20 24.6 L26.2 18.4 V24.6Z" fill="#5e5e5e"/></svg>
<svg style="left:541px;top:102px" width="28" height="26" viewBox="0 0 28 26"><circle cx="12.6" cy="12" r="9.2" fill="none" stroke="#6e6e6e" stroke-width="1"/><path d="M13 12 H24" stroke="#111" stroke-width="1.5"/><circle cx="12.6" cy="12" r="1.7" fill="#fff" stroke="#111" stroke-width="1"/><path d="M20 24.6 L26.2 18.4 V24.6Z" fill="#5e5e5e"/></svg>
<svg style="left:569px;top:102px" width="28" height="26" viewBox="0 0 28 26"><path d="M20.2 1.8 H23.8 V5.6 M2.2 19.4 V23.4 H6" fill="none" stroke="#000" stroke-width="1.4"/><circle cx="9.4" cy="8.4" r="3.2" fill="#ffd21a" stroke="#c87000" stroke-width="0.9"/><rect x="14.6" y="7.4" width="6.2" height="6.2" fill="#ffd21a" stroke="#c87000" stroke-width="0.9"/><path d="M11.4 14.8 L14.6 19.6 H8.2Z" fill="#fff4cc" stroke="#c0501a" stroke-width="0.9"/><path d="M20 24.6 L26.2 18.4 V24.6Z" fill="#5e5e5e"/></svg>
<svg style="left:597px;top:102px" width="28" height="26" viewBox="0 0 28 26"><path d="M13 1.8 Q19.8 1.8 19.8 8.4 Q19.8 11.6 17 14.4 Q15.8 15.8 15.8 17.4 H10.2 Q10.2 15.8 9 14.4 Q6.2 11.6 6.2 8.4 Q6.2 1.8 13 1.8Z" fill="url(#gBulb)" stroke="#5a5a5a" stroke-width="0.9"/><path d="M10.2 17.4 H15.8 V20 Q15.8 21.6 13 21.6 Q10.2 21.6 10.2 20Z" fill="#7a7a7a" stroke="#444" stroke-width="0.8"/><path d="M12 20 h2.4" stroke="#eee" stroke-width="1.2"/><path d="M20 24.6 L26.2 18.4 V24.6Z" fill="#5e5e5e"/></svg>
<svg style="left:625px;top:102px" width="28" height="26" viewBox="0 0 28 26"><path d="M10.4 10 V7.4 Q10.4 4 13.2 4 Q16 4 16 7.4 V10" fill="none" stroke="#111" stroke-width="2.2"/><rect x="7.8" y="10" width="10.8" height="9.2" rx="1.2" fill="#cfcfcf" stroke="#111" stroke-width="1.5"/><path d="M10 13.2 h6.4 M10 16 h6.4" stroke="#f2f2f2" stroke-width="1.2"/><path d="M20 24.6 L26.2 18.4 V24.6Z" fill="#5e5e5e"/></svg>
<svg style="left:653px;top:102px" width="28" height="26" viewBox="0 0 28 26"><path d="M4.2 3.2 L21.7 6.9 V9 L12 15.5 L4.2 5.5Z" fill="#ff6a0a"/><path d="M12 13.2 L21.7 7.4 V10.6 L12 16.6Z" fill="#f01a0a"/><path d="M4.2 5.5 L12 15.8 V18.4 L4.2 9.4Z" fill="#fbfbff"/><path d="M4.2 9.4 L12 18.4 L11 21.6 L4.2 12.9Z" fill="#4a6ade"/><path d="M12 16.6 L21.7 10.6 V13 L12 18.8Z" fill="#d4d8e6"/><path d="M12 18.8 L21.7 13 V16.2 L11 21.6Z" fill="#16349a"/><path d="M4.2 3.2 L21.7 6.9 V16.2 L11 21.6 L4.2 12.9Z" fill="none" stroke="#0a0a14" stroke-width="1.2" stroke-linejoin="round"/><path d="M20 24.6 L26.2 18.4 V24.6Z" fill="#5e5e5e"/></svg>
<svg style="left:681px;top:102px" width="28" height="26" viewBox="0 0 28 26"><path d="M9.74 4.65 A7.2 7.2 0 0 1 15.58 4.79" stroke="#f01a0a" stroke-width="4" fill="none"/><path d="M15.26 4.65 A7.2 7.2 0 0 1 19.28 8.88" stroke="#ffb81a" stroke-width="4" fill="none"/><path d="M19.15 8.54 A7.2 7.2 0 0 1 19.01 14.38" stroke="#a8700a" stroke-width="4" fill="none"/><path d="M19.15 14.06 A7.2 7.2 0 0 1 14.92 18.08" stroke="#0a8a1a" stroke-width="4" fill="none"/><path d="M15.26 17.95 A7.2 7.2 0 0 1 9.42 17.81" stroke="#0a6ae0" stroke-width="4" fill="none"/><path d="M9.74 17.95 A7.2 7.2 0 0 1 5.72 13.72" stroke="#1a3aa0" stroke-width="4" fill="none"/><path d="M5.85 14.06 A7.2 7.2 0 0 1 5.99 8.22" stroke="#7a3a9a" stroke-width="4" fill="none"/><path d="M5.85 8.54 A7.2 7.2 0 0 1 10.08 4.52" stroke="#f0a868" stroke-width="4" fill="none"/><circle cx="12.5" cy="11.3" r="9.3" fill="none" stroke="#1a1a2a" stroke-width="0.8"/><path d="M20 24.6 L26.2 18.4 V24.6Z" fill="#5e5e5e"/></svg>
<svg style="left:709px;top:102px" width="28" height="26" viewBox="0 0 28 26"><circle cx="13" cy="11.6" r="9" fill="url(#gGrey)" stroke="#3a3a3a" stroke-width="0.8"/><path d="M4 12.6 Q13 15 22 12.6 M11.6 2.8 Q8.6 11.6 11.6 20.6" fill="none" stroke="#3c3c3c" stroke-width="1.2"/></svg>
<svg style="left:737px;top:102px" width="28" height="26" viewBox="0 0 28 26"><rect x="1.6" y="0.6" width="23.2" height="22.4" fill="#e2e4e8"/><path d="M1.6 3 H24.8 M1.6 21 H24.8 M4 0.6 V23 M22.4 0.6 V23" stroke="#c4c6cc" stroke-width="0.8" stroke-dasharray="1 1"/><circle cx="13" cy="11.6" r="9" fill="url(#gGrey)" stroke="#3a3a3a" stroke-width="0.8"/><path d="M4 12.6 Q13 15 22 12.6 M11.6 2.8 Q8.6 11.6 11.6 20.6" fill="none" stroke="#3c3c3c" stroke-width="1.2"/><path d="M20 24.6 L26.2 18.4 V24.6Z" fill="#5e5e5e"/></svg>
<svg style="left:765px;top:102px" width="28" height="26" viewBox="0 0 28 26"><ellipse cx="14" cy="20.4" rx="9" ry="2.4" fill="#b0b4bc"/><circle cx="13" cy="11.4" r="9" fill="url(#gBlue)" stroke="#000a3a" stroke-width="0.6"/><ellipse cx="9.8" cy="7" rx="2.6" ry="1.8" transform="rotate(-30 9.8 7)" fill="#e8f2ff" opacity="0.9"/><path d="M20 24.6 L26.2 18.4 V24.6Z" fill="#5e5e5e"/></svg>
<svg style="left:793px;top:102px" width="28" height="26" viewBox="0 0 28 26"><g transform="translate(2.2 -0.4) scale(0.93)"><path d="M22.8 1.4 L8.6 5.4 Q11 13 19.8 14.6Z" fill="url(#gCone)" stroke="#7a3000" stroke-width="0.7"/><path d="M8.6 5.4 Q11 13 19.8 14.6 Q14 12.6 10.6 6Z" fill="#ffe8c0" stroke="#7a3000" stroke-width="0.6"/><path d="M22.8 1.4 L19.8 14.6" stroke="#1a2a7a" stroke-width="0.9"/></g><path d="M20 24.6 L26.2 18.4 V24.6Z" fill="#5e5e5e"/></svg>
<svg style="left:821px;top:102px" width="28" height="26" viewBox="0 0 28 26"><path d="M19.8 10.1 L22.9 10.1 L22.9 13.9 L19.8 13.9 L19.6 14.8 L19.2 15.5 L21.3 17.7 L18.6 20.4 L16.4 18.3 L15.7 18.7 L14.8 18.9 L14.8 22.0 L11.0 22.0 L11.0 18.9 L10.1 18.7 L9.4 18.3 L7.2 20.4 L4.5 17.7 L6.6 15.5 L6.2 14.8 L6.0 13.9 L2.9 13.9 L2.9 10.1 L6.0 10.1 L6.2 9.2 L6.6 8.5 L4.5 6.3 L7.2 3.6 L9.4 5.7 L10.1 5.3 L11.0 5.1 L11.0 2.0 L14.8 2.0 L14.8 5.1 L15.7 5.3 L16.4 5.7 L18.6 3.6 L21.3 6.3 L19.2 8.5 L19.6 9.2Z" fill="#f2c850" stroke="#5a3c00" stroke-width="1" stroke-linejoin="round"/><rect x="10.4" y="5.6" width="5" height="9" rx="1.6" fill="url(#gGr)" stroke="#111" stroke-width="1.1"/><path d="M20 24.6 L26.2 18.4 V24.6Z" fill="#5e5e5e"/></svg>
<svg style="left:849px;top:102px" width="28" height="26" viewBox="0 0 28 26"><g stroke="#000" stroke-width="1.3" fill="none"><path d="M3 2.8 H11 M3 13.6 H11.6 M12.8 15 V23 M22.6 15 V23"/><path d="M4.8 4.6 V11.8 M14.4 20.4 H21" stroke-width="1.1"/></g><path d="M4.8 3.8 L6.4 6.4 H3.2Z M4.8 12.6 L6.4 10 H3.2Z M13.6 20.4 L16.2 18.8 V22Z M21.8 20.4 L19.2 18.8 V22Z" fill="#000"/><g fill="#fff" stroke="#000" stroke-width="1"><rect x="11" y="1.6" width="2.4" height="2.4"/><rect x="11.6" y="12.4" width="2.4" height="2.4"/><rect x="21.4" y="12.4" width="2.4" height="2.4"/></g><path d="M20 24.6 L26.2 18.4 V24.6Z" fill="#5e5e5e"/></svg>
<svg style="left:877px;top:102px" width="28" height="26" viewBox="0 0 28 26"><circle cx="13" cy="11.6" r="10.4" fill="#b7d39c" stroke="#7c7c7c" stroke-width="1.6"/><path d="M5 14 Q8 9 12 12 L16 8 Q18 6 20 7 Q17 10 18 13 Q15 17 12 20 Q7 21 5 17Z" fill="#5a5a5a"/><path d="M14 14 Q18 12 21 15 Q19 19 15 20Z" fill="#8aa878"/><circle cx="9" cy="7" r="1" fill="#e8d870"/><circle cx="17" cy="17" r="0.9" fill="#e8a050"/><path d="M20 24.6 L26.2 18.4 V24.6Z" fill="#5e5e5e"/></svg>
<svg style="left:905px;top:102px" width="28" height="26" viewBox="0 0 28 26"><circle cx="13" cy="11.6" r="9.6" fill="url(#gHelp)" stroke="#10207a" stroke-width="0.6"/><text x="13" y="17.6" text-anchor="middle" font-family="Liberation Serif, serif" font-weight="700" font-size="17.5" fill="#fff">?</text><path d="M20 24.6 L26.2 18.4 V24.6Z" fill="#5e5e5e"/></svg>
<svg style="left:3.5px;top:148.2px" width="26" height="26" viewBox="0 0 26 26"><path d="M6.4 4.4 V16.4 L9.4 13.6 L11.6 18.4 L13.6 17.4 L11.4 12.8 L15.4 12.6Z" fill="#fff" stroke="#000" stroke-width="1.1" stroke-linejoin="miter"/></svg>
<svg style="left:31.5px;top:148.2px" width="26" height="26" viewBox="0 0 26 26"><circle cx="10.7" cy="11.6" r="1.9" fill="#fff" stroke="#000" stroke-width="1"/><path d="M18.4 24.6 L24.6 18.4 V24.6Z" fill="#5e5e5e"/></svg>
<svg style="left:3.5px;top:176.2px" width="26" height="26" viewBox="0 0 26 26"><path d="M3.8 19.4 L9.2 6.2 L19 16.6" fill="none" stroke="#222" stroke-width="1"/><circle cx="3.8" cy="19.4" r="1.3" fill="#fff" stroke="#000" stroke-width="1"/><circle cx="9.2" cy="6.2" r="1.3" fill="#fff" stroke="#000" stroke-width="1"/><circle cx="19" cy="16.6" r="1.3" fill="#fff" stroke="#000" stroke-width="1"/><path d="M18.4 24.6 L24.6 18.4 V24.6Z" fill="#5e5e5e"/></svg>
<svg style="left:31.5px;top:176.2px" width="26" height="26" viewBox="0 0 26 26"><path d="M3.6 6 Q8 3.2 12.6 3.6 Q19.4 4.6 19.2 11.6 Q19 18.6 3.6 18" fill="none" stroke="#333" stroke-width="1"/><rect x="2.1" y="4.8" width="2.6" height="2.6" fill="#fff" stroke="#000" stroke-width="1.1"/><rect x="16.1" y="1.6" width="2.6" height="2.6" fill="#fff" stroke="#000" stroke-width="1.1"/><rect x="2.1" y="16.6" width="2.6" height="2.6" fill="#fff" stroke="#000" stroke-width="1.1"/><rect x="18.0" y="18.5" width="2.6" height="2.6" fill="#fff" stroke="#000" stroke-width="1.1"/><path d="M18.4 24.6 L24.6 18.4 V24.6Z" fill="#5e5e5e"/></svg>
<svg style="left:3.5px;top:204.2px" width="26" height="26" viewBox="0 0 26 26"><circle cx="11.8" cy="11.5" r="9.5" fill="none" stroke="#4a4a4a" stroke-width="1"/><path d="M11.8 11.5 L17.7 5.5" stroke="#111" stroke-width="1.2"/><circle cx="11.8" cy="11.5" r="1.3" fill="#fff" stroke="#000" stroke-width="1"/><circle cx="17.7" cy="5.5" r="1.3" fill="#fff" stroke="#000" stroke-width="1"/><path d="M18.4 24.6 L24.6 18.4 V24.6Z" fill="#5e5e5e"/></svg>
<svg style="left:31.5px;top:204.2px" width="26" height="26" viewBox="0 0 26 26"><ellipse cx="11.3" cy="11.9" rx="9.5" ry="6.4" fill="none" stroke="#333" stroke-width="1"/><path d="M11.3 11.9 H20.5" stroke="#333" stroke-width="0.9"/><rect x="10.0" y="3.9" width="2.6" height="2.6" fill="#fff" stroke="#000" stroke-width="1.1"/><rect x="10.0" y="10.6" width="2.6" height="2.6" fill="#fff" stroke="#000" stroke-width="1.1"/><rect x="19.2" y="10.6" width="2.6" height="2.6" fill="#fff" stroke="#000" stroke-width="1.1"/><path d="M18.4 24.6 L24.6 18.4 V24.6Z" fill="#5e5e5e"/></svg>
<svg style="left:3.5px;top:232.2px" width="26" height="26" viewBox="0 0 26 26"><path d="M5 3.4 Q15.5 4.4 20 12.3 L5 20.3Z" fill="none" stroke="#222" stroke-width="1"/><circle cx="5" cy="3.4" r="1.3" fill="#fff" stroke="#000" stroke-width="1"/><circle cx="20" cy="12.3" r="1.3" fill="#fff" stroke="#000" stroke-width="1"/><circle cx="5" cy="20.3" r="1.3" fill="#fff" stroke="#000" stroke-width="1"/><path d="M18.4 24.6 L24.6 18.4 V24.6Z" fill="#5e5e5e"/></svg>
<svg style="left:31.5px;top:232.2px" width="26" height="26" viewBox="0 0 26 26"><rect x="3.1" y="6.7" width="16.8" height="10.7" fill="none" stroke="#111" stroke-width="1.3"/><circle cx="19.9" cy="6.7" r="1.3" fill="#fff" stroke="#000" stroke-width="1"/><circle cx="3.1" cy="17.4" r="1.3" fill="#fff" stroke="#000" stroke-width="1"/><path d="M18.4 24.6 L24.6 18.4 V24.6Z" fill="#5e5e5e"/></svg>
<svg style="left:3.5px;top:260.2px" width="26" height="26" viewBox="0 0 26 26"><path d="M2.9 11.3 L7.2 4 H15.6 L19.9 11.3 L15.6 18.6 H7.2Z" fill="none" stroke="#444" stroke-width="1"/><path d="M11.4 11.3 H19.9" stroke="#111" stroke-width="1"/><circle cx="11.4" cy="11.3" r="1.3" fill="#fff" stroke="#000" stroke-width="1"/><circle cx="19.6" cy="11.3" r="1.3" fill="#fff" stroke="#000" stroke-width="1"/><path d="M18.4 24.6 L24.6 18.4 V24.6Z" fill="#5e5e5e"/></svg>
<svg style="left:31.5px;top:260.2px" width="26" height="26" viewBox="0 0 26 26"><path d="M3.4 5 H19.3 V20" fill="none" stroke="#b8b8b8" stroke-width="0.9"/><path d="M3.4 5 H9 Q19.3 5 19.3 15 V20" fill="none" stroke="#111" stroke-width="1.9"/><rect x="2.1" y="3.7" width="2.6" height="2.6" fill="#fff" stroke="#000" stroke-width="1.1"/><rect x="18.0" y="18.8" width="2.6" height="2.6" fill="#fff" stroke="#000" stroke-width="1.1"/><path d="M18.4 24.6 L24.6 18.4 V24.6Z" fill="#5e5e5e"/></svg>
<svg style="left:3.5px;top:288.2px" width="26" height="26" viewBox="0 0 26 26"><path d="M7.6 3.9 L19.6 3.9 L14.5 19.8 L3.4 15Z" fill="url(#gBl)" stroke="#1a2a6a" stroke-width="0.9"/><path d="M13.6 3.9 Q11 11.4 8.8 17.4 M5.6 9.4 Q11.4 8.6 17.2 11.4" fill="none" stroke="#1a2a7a" stroke-width="1"/><path d="M7.6 3.9 H19.6" stroke="#000" stroke-width="1.1"/><rect x="6.1" y="2.4" width="3" height="3" fill="#fff" stroke="#000" stroke-width="1.1"/><rect x="18.1" y="2.4" width="3" height="3" fill="#fff" stroke="#000" stroke-width="1.1"/><rect x="13.0" y="18.3" width="3" height="3" fill="#fff" stroke="#000" stroke-width="1.1"/><rect x="1.9" y="13.5" width="3" height="3" fill="#fff" stroke="#000" stroke-width="1.1"/><path d="M18.4 24.6 L24.6 18.4 V24.6Z" fill="#5e5e5e"/></svg>
<svg style="left:31.5px;top:288.2px" width="26" height="26" viewBox="0 0 26 26"><path d="M4.2 6.8 L9.6 3 Q17.4 3.6 19.8 11.6 V17.6 L13.2 21.8 V15.4 Q12 9.4 4.2 6.8Z" fill="url(#gBl)" stroke="#111" stroke-width="1"/><path d="M4.2 6.8 L9.6 3 Q12.6 3.2 14.6 4.6 L9 8.8Q6.8 7.6 4.2 6.8Z" fill="#fff" stroke="#111" stroke-width="0.9"/><path d="M13.2 17.2 L19.8 13.4 V17.6 L13.2 21.8Z" fill="#fff" stroke="#111" stroke-width="0.9"/><path d="M18.4 24.6 L24.6 18.4 V24.6Z" fill="#5e5e5e"/></svg>
<svg style="left:3.5px;top:316.2px" width="26" height="26" viewBox="0 0 26 26"><path d="M3.4 7.7 L11.4 3.2 L19.2 7.7 L12.6 10.4Z" fill="#9db4fb" stroke="#0a1440" stroke-width="0.9"/><path d="M3.4 7.7 L12.6 10.4 V21.3 L3.4 17.8Z" fill="#5b7ff0" stroke="#0a1440" stroke-width="0.9"/><path d="M12.6 10.4 L19.2 7.7 V17.5 L12.6 21.3Z" fill="#3553cc" stroke="#0a1440" stroke-width="0.9"/><path d="M18.4 24.6 L24.6 18.4 V24.6Z" fill="#5e5e5e"/></svg>
<svg style="left:31.5px;top:316.2px" width="26" height="26" viewBox="0 0 26 26"><circle cx="7.9" cy="15.3" r="7" fill="url(#gBlue2)" stroke="#0a1440" stroke-width="0.9"/><path d="M1.4 16.4 Q8 18.6 14.6 16 M6.8 8.6 Q4.8 15 7.6 22" fill="none" stroke="#1a2a7a" stroke-width="0.9"/><circle cx="15.1" cy="7.7" r="7" fill="url(#gBlue2)" stroke="#0a1440" stroke-width="0.9"/><path d="M8.4 8.8 Q15 11 21.8 8.4 M14 1 Q12 7.6 14.8 14.4" fill="none" stroke="#1a2a7a" stroke-width="0.9"/><path d="M18.4 24.6 L24.6 18.4 V24.6Z" fill="#5e5e5e"/></svg>
<svg style="left:3.5px;top:344.2px" width="26" height="26" viewBox="0 0 26 26"><ellipse cx="11.4" cy="3.8" rx="5.6" ry="2.5" fill="none" stroke="#111" stroke-width="1.1"/><path d="M0.8 10 Q11.4 14.4 22.4 10 V20.4 Q11.4 24.8 0.8 20.4Z" fill="#4567de" stroke="#0a1440" stroke-width="0.9"/><ellipse cx="11.4" cy="17.6" rx="6" ry="2.5" fill="#7e9bf2" stroke="#fff" stroke-width="1.6"/><path d="M18.4 24.6 L24.6 18.4 V24.6Z" fill="#5e5e5e"/></svg>
<svg style="left:31.5px;top:344.2px" width="26" height="26" viewBox="0 0 26 26"><path d="M10 2.4 L22.6 6.6 Q19 13 15.2 22.6 L1.8 16.6 Q7 10 10 2.4Z" fill="url(#gBl)" stroke="#1a2a6a" stroke-width="0.9"/><path d="M16.2 4.6 Q12.8 12 8.4 19.6 M7.4 8.4 Q13.4 11.6 19.6 12.6 M13.2 3.6 Q10 11 5 18 M19.4 5.6 Q16 13 11.8 21 M8.8 5.6 Q15 8.4 21 9.4 M4.6 12.6 Q11 15.4 17.6 16.8" fill="none" stroke="#1a2a7a" stroke-width="0.8"/><path d="M18.4 24.6 L24.6 18.4 V24.6Z" fill="#5e5e5e"/></svg>
<svg style="left:3.5px;top:372.2px" width="26" height="26" viewBox="0 0 26 26"><path d="M-4.4 -4.4 H-2.0 A2.0 2.0 0 1 1 2.0 -4.4 H4.4 V-2.0 A2.0 2.0 0 1 1 4.4 2.0 V4.4 H2.0 A2.0 2.0 0 1 0 -2.0 4.4 H-4.4 V2.0 A2.0 2.0 0 1 0 -4.4 -2.0Z" transform="translate(7.8 8.1) rotate(22)" fill="#ffa31a" stroke="#000" stroke-width="1.1"/><path d="M-4.4 -4.4 H-2.0 A2.0 2.0 0 1 1 2.0 -4.4 H4.4 V-2.0 A2.0 2.0 0 1 1 4.4 2.0 V4.4 H2.0 A2.0 2.0 0 1 0 -2.0 4.4 H-4.4 V2.0 A2.0 2.0 0 1 0 -4.4 -2.0Z" transform="translate(15.6 16) rotate(22)" fill="#ffffff" stroke="#000" stroke-width="1.1"/></svg>
<svg style="left:31.5px;top:372.2px" width="26" height="26" viewBox="0 0 26 26"><path d="M3.7 5.3 L7.6 13.8 L16.6 3.6 L11.8 16 L20.8 18.6 L13 20 L14.8 23.4 L6 23.6 H0Z" fill="#ffa812" stroke="#1a1a1a" stroke-width="1" stroke-linejoin="miter"/><path d="M3.7 5.3 L7.6 13.8 L3 18Z" fill="#111"/></svg>
<svg style="left:3.5px;top:400.2px" width="26" height="26" viewBox="0 0 26 26"><g transform="translate(0 1.5)"><path d="M10.8 0.6 H17.4 L11.6 12.4 L10.8 12Z" fill="#1a2e96"/><rect x="0.9" y="8.6" width="10.2" height="4.4" fill="#fff" stroke="#000" stroke-width="1.1"/><path d="M11.4 13.6 L14.6 10.4 L20 15.8 L16.8 19Z" fill="#fff" stroke="#222" stroke-width="1"/></g></svg>
<svg style="left:31.5px;top:400.2px" width="26" height="26" viewBox="0 0 26 26"><g transform="translate(0 1.5)"><path d="M12.6 1.4 H18.6 L12.8 13 L12.6 13Z" fill="#1a2e96"/><rect x="2.1" y="9.6" width="17.8" height="4.6" fill="#fff" stroke="#000" stroke-width="1.2"/><path d="M12.6 9.6 V14 L15 9.6Z" fill="#1a2e96"/></g></svg>
<svg style="left:3.5px;top:428.2px" width="26" height="26" viewBox="0 0 26 26"><g transform="translate(0 1.5)"><circle cx="11.6" cy="7" r="4.6" fill="#000"/><circle cx="8.2" cy="12.6" r="4.6" fill="#000"/><circle cx="15" cy="12.6" r="4.6" fill="#000"/><circle cx="11.6" cy="7" r="3.1" fill="#a9baf8"/><circle cx="8.2" cy="12.6" r="3.1" fill="#fff"/><circle cx="15" cy="12.6" r="3.1" fill="#1a2896"/></g><path d="M18.4 24.6 L24.6 18.4 V24.6Z" fill="#5e5e5e"/></svg>
<svg style="left:31.5px;top:428.2px" width="26" height="26" viewBox="0 0 26 26"><g transform="translate(0 1.5)"><circle cx="11.4" cy="5.6" r="3.4" fill="#9fb2f6" stroke="#333" stroke-width="0.9"/><circle cx="6.4" cy="14" r="3.4" fill="#fff" stroke="#222" stroke-width="1"/><circle cx="16.4" cy="14" r="3.4" fill="#1a2896" stroke="#0a0a3a" stroke-width="0.9"/></g></svg>
<svg style="left:3.5px;top:456.2px" width="26" height="26" viewBox="0 0 26 26"><g transform="translate(0 1.8)"><path d="M1.4 5.4 Q14 3.4 16.6 20" fill="none" stroke="#000" stroke-width="1.6"/><rect x="5.2" y="3.4" width="2.8" height="2.8" fill="#fff" stroke="#000" stroke-width="1.1"/><rect x="15.2" y="13.4" width="2.8" height="2.8" fill="#fff" stroke="#000" stroke-width="1.1"/></g></svg>
<svg style="left:31.5px;top:456.2px" width="26" height="26" viewBox="0 0 26 26"><g transform="translate(0 1.8)"><path d="M1.4 1.4 H8.4 Q16 5 20.2 12.6 V18" fill="none" stroke="#000" stroke-width="1" stroke-dasharray="1 1.2"/><path d="M1.6 5.2 Q14 5 16.6 20" fill="none" stroke="#000" stroke-width="2.2"/><rect x="7.0" y="0.0" width="2.8" height="2.8" fill="#fff" stroke="#000" stroke-width="1.1"/><rect x="18.8" y="11.2" width="2.8" height="2.8" fill="#fff" stroke="#000" stroke-width="1.1"/></g><path d="M18.4 24.6 L24.6 18.4 V24.6Z" fill="#5e5e5e"/></svg>
<svg style="left:3.5px;top:484.2px" width="26" height="26" viewBox="0 0 26 26"><path d="M2.6 3.6 L8 1.2 L18.6 3.6 V8.4 L16 7.6 L15.6 5.6 L13.2 5.4 V19 L15.4 20 V22.4 L7.2 20.6 V18.6 L9.2 18.4 V5 L6.6 5.4 L5.8 8 L2.6 8.6Z" fill="url(#gBlV)" stroke="#0a1a5a" stroke-width="1.1" stroke-linejoin="round"/></svg>
<svg style="left:31.5px;top:484.2px" width="26" height="26" viewBox="0 0 26 26"><path d="M10 14.4 L16.4 8.6" stroke="#222" stroke-width="1"/><path d="M17.6 7.4 L13.4 8.4 L16.6 11.6Z" fill="#111"/><rect x="3.9" y="14.3" width="6.2" height="6.2" fill="#ececec" stroke="#000" stroke-width="1.3"/><rect x="15.9" y="2.1" width="6.2" height="6.2" fill="#6e8ff0" stroke="#000" stroke-width="1.2"/><path d="M18.4 24.6 L24.6 18.4 V24.6Z" fill="#5e5e5e"/></svg>
<svg style="left:3.5px;top:512.2px" width="26" height="26" viewBox="0 0 26 26"><g transform="translate(0 1.5)"><rect x="3.6" y="0.6" width="6.2" height="6.2" fill="#6e8ff0" stroke="#000" stroke-width="1.1"/><rect x="15.8" y="3.5" width="6.2" height="6.2" fill="#6e8ff0" stroke="#000" stroke-width="1.1"/><rect x="11.9" y="6.5" width="6.2" height="6.2" fill="#6e8ff0" stroke="#000" stroke-width="1.1"/><rect x="3.6" y="12.5" width="6.2" height="6.2" fill="#ececec" stroke="#000" stroke-width="1.1"/><rect x="15.8" y="14.5" width="6.2" height="6.2" fill="#6e8ff0" stroke="#000" stroke-width="1.1"/></g></svg>
<svg style="left:31.5px;top:512.2px" width="26" height="26" viewBox="0 0 26 26"><g transform="translate(0 1.5)"><rect x="1.2" y="2.4" width="5" height="13.6" fill="#fff" stroke="#000" stroke-width="1.2"/><path d="M6.6 5 H13.4 V8" fill="none" stroke="#222" stroke-width="1"/><path d="M13.4 9.4 L11.8 6.8 H15Z" fill="#222"/><path d="M9.2 16.6 L18.6 7.6 L21.6 11 L12.2 19.8Z" fill="#6e8ff0" stroke="#0a1a5a" stroke-width="1.1"/></g></svg>
<svg style="left:3.5px;top:540.2px" width="26" height="26" viewBox="0 0 26 26"><path d="M2 7.6 L11 2.6 L21 6.4 L12 11Z" fill="#9ab3fb" stroke="#0a1440" stroke-width="0.9"/><path d="M2 7.6 L12 11 V21.8 L2 17.4Z" fill="#6a8cf0" stroke="#0a1440" stroke-width="0.9"/><path d="M12 11 L21 6.4 V16.8 L12 21.8Z" fill="#5074e2" stroke="#0a1440" stroke-width="0.9"/><path d="M7.4 14.2 L13.2 16.2 L17 14.2 V20 L13.2 22 L7.4 20.2Z" fill="#fff" stroke="#000" stroke-width="0.9"/><path d="M13.2 16.2 V22" stroke="#000" stroke-width="0.8"/><path d="M13.2 16.2 L17 14.2 V20 L13.2 22Z" fill="#d8d8d8"/><path d="M18.4 24.6 L24.6 18.4 V24.6Z" fill="#5e5e5e"/></svg>
<svg style="left:31.5px;top:540.2px" width="26" height="26" viewBox="0 0 26 26"><path d="M1.6 20.8 L5.6 16.4 H22.4 L18.6 20.8Z" fill="#5678ea" stroke="#0a1a5a" stroke-width="1"/><path d="M4 16.4 H22" stroke="#000" stroke-width="1.2" stroke-dasharray="2.4 1.6"/><path d="M8.6 8.6 V18 M12.2 7 V17 M15.8 8.6 V18" stroke="#fff" stroke-width="1.5"/><path d="M6.8 10 L8.6 7.6 L10.4 10 M10.4 8.4 L12.2 6 L14 8.4 M14 10 L15.8 7.6 L17.6 10" fill="none" stroke="#fff" stroke-width="1.3"/><path d="M18.4 24.6 L24.6 18.4 V24.6Z" fill="#5e5e5e"/></svg>
<svg style="left:3.5px;top:568.2px" width="26" height="26" viewBox="0 0 26 26"><rect x="2.2" y="2.2" width="4" height="4" fill="#6e8ff0" stroke="#000" stroke-width="1.2"/><rect x="9.2" y="2.2" width="4" height="4" fill="#6e8ff0" stroke="#000" stroke-width="1.2"/><rect x="16.2" y="2.2" width="4" height="4" fill="#6e8ff0" stroke="#000" stroke-width="1.2"/><rect x="2.2" y="9.2" width="4" height="4" fill="#6e8ff0" stroke="#000" stroke-width="1.2"/><rect x="9.2" y="9.2" width="4" height="4" fill="#6e8ff0" stroke="#000" stroke-width="1.2"/><rect x="16.2" y="9.2" width="4" height="4" fill="#6e8ff0" stroke="#000" stroke-width="1.2"/><rect x="2.2" y="16.2" width="4" height="4" fill="#fff" stroke="#000" stroke-width="1.2"/><rect x="9.2" y="16.2" width="4" height="4" fill="#6e8ff0" stroke="#000" stroke-width="1.2"/><rect x="16.2" y="16.2" width="4" height="4" fill="#6e8ff0" stroke="#000" stroke-width="1.2"/><path d="M18.4 24.6 L24.6 18.4 V24.6Z" fill="#5e5e5e"/></svg>
<svg style="left:31.5px;top:568.2px" width="26" height="26" viewBox="0 0 26 26"><rect x="7.8" y="2.2" width="9.4" height="5" fill="#f0f0f0" stroke="#000" stroke-width="1.3"/><rect x="9.8" y="9" width="5.2" height="4.4" fill="#f0f0f0" stroke="#000" stroke-width="1.3"/><rect x="8.6" y="15.2" width="7.4" height="6" fill="#f0f0f0" stroke="#000" stroke-width="1.3"/><path d="M12.3 0.6 V22.6" stroke="#f01a0a" stroke-width="1.9"/><path d="M12.3 3 V21" stroke="#ff9a1a" stroke-width="0.8" stroke-dasharray="1.6 2"/><path d="M18.4 24.6 L24.6 18.4 V24.6Z" fill="#5e5e5e"/></svg>
<svg style="left:3.5px;top:596.2px" width="26" height="26" viewBox="0 0 26 26"><g transform="translate(0 0.6)"><path d="M2.2 4.6 Q4.6 2.6 7.8 3.8 L8.6 16.6 L4.4 15.4 Q2.4 14.6 2.2 12Z" fill="url(#gGr)" stroke="#222" stroke-width="1"/><path d="M10 1 L14.6 3.6 L10.6 6Z" fill="#e8e8e8" stroke="#222" stroke-width="0.8"/><path d="M12.6 5 L19.4 6.6 L14.8 19.4 L8 17.6Z" fill="url(#gBl)" stroke="#0a1a5a" stroke-width="1.1"/><path d="M14.8 19.4 L13.4 20 L7 18 L8 17.6" fill="#2a3f9a" stroke="#0a1a5a" stroke-width="0.8"/></g><path d="M18.4 24.6 L24.6 18.4 V24.6Z" fill="#5e5e5e"/></svg>
<svg style="left:31.5px;top:596.2px" width="26" height="26" viewBox="0 0 26 26"><g transform="translate(0 0.6)"><path d="M2.4 13.6 L6 18.6 L19.6 2.6" fill="none" stroke="#000" stroke-width="2.2" stroke-linejoin="miter"/></g><path d="M18.4 24.6 L24.6 18.4 V24.6Z" fill="#5e5e5e"/></svg>
<svg style="left:3.5px;top:624.2px" width="26" height="26" viewBox="0 0 26 26"><g transform="translate(0 0.9)"><path d="M1.8 6.8 L8 3.4 L13.6 6 L8.8 9.4Z" fill="#e4e4e4" stroke="#111" stroke-width="0.9"/><path d="M1.8 6.8 L8.8 9.4 V18.6 L1.8 15.4Z" fill="#a8a8a8" stroke="#111" stroke-width="0.9"/><path d="M8.8 9.4 L13.6 6 V15 L8.8 18.6Z" fill="#7e7e7e" stroke="#111" stroke-width="0.9"/><path d="M15.6 5 L21.4 17 Q21 20.2 16 20.4 Q11.4 20.2 11 17.6Z" fill="url(#gGr)" stroke="#222" stroke-width="1"/></g><path d="M18.4 24.6 L24.6 18.4 V24.6Z" fill="#5e5e5e"/></svg>
<svg style="left:31.5px;top:624.2px" width="26" height="26" viewBox="0 0 26 26"><g transform="translate(0 0.9)"><path d="M8.2 6 L13.6 1.6 L18 2 V6 L14 6.8 L10.4 8.6Z" fill="#b8b8b8" stroke="#555" stroke-width="0.7"/><path d="M9.6 6.4 L13 3 M11 7.4 L14.6 3.8 M12.6 7.6 L16 4.4" stroke="#666" stroke-width="0.7"/><rect x="18" y="0.4" width="3.6" height="6.4" fill="#000"/><path d="M11 7.4 L2.6 16.8 L10.4 21 L19.4 16.4Z" fill="#f5a83a" stroke="#5a3400" stroke-width="0.9"/><path d="M11 7.4 L10.4 21 L19.4 16.4Z" fill="#e08a1a" stroke="#5a3400" stroke-width="0.8"/></g><path d="M18.4 24.6 L24.6 18.4 V24.6Z" fill="#5e5e5e"/></svg>
<svg style="left:1057px;top:160px" width="18" height="18" viewBox="0 0 18 18"><path d="M7.01 4.20 A5.2 5.2 0 0 1 11.27 4.32" stroke="#f01a0a" stroke-width="3.2" fill="none"/><path d="M10.99 4.20 A5.2 5.2 0 0 1 13.91 7.30" stroke="#ffb81a" stroke-width="3.2" fill="none"/><path d="M13.80 7.01 A5.2 5.2 0 0 1 13.68 11.27" stroke="#a8700a" stroke-width="3.2" fill="none"/><path d="M13.80 10.99 A5.2 5.2 0 0 1 10.70 13.91" stroke="#0a8a1a" stroke-width="3.2" fill="none"/><path d="M10.99 13.80 A5.2 5.2 0 0 1 6.73 13.68" stroke="#0a6ae0" stroke-width="3.2" fill="none"/><path d="M7.01 13.80 A5.2 5.2 0 0 1 4.09 10.70" stroke="#1a3aa0" stroke-width="3.2" fill="none"/><path d="M4.20 10.99 A5.2 5.2 0 0 1 4.32 6.73" stroke="#7a3a9a" stroke-width="3.2" fill="none"/><path d="M4.20 7.01 A5.2 5.2 0 0 1 7.30 4.09" stroke="#f0a868" stroke-width="3.2" fill="none"/><circle cx="9" cy="9" r="7" fill="none" stroke="#3a2a4a" stroke-width="0.6"/></svg>
<svg style="left:1097px;top:160px" width="18" height="18" viewBox="0 0 18 18"><g transform="translate(-1.6 -1.2) scale(0.8)"><path d="M4.2 3.2 L21.7 6.9 V9 L12 15.5 L4.2 5.5Z" fill="#ff6a0a"/><path d="M12 13.2 L21.7 7.4 V10.6 L12 16.6Z" fill="#f01a0a"/><path d="M4.2 5.5 L12 15.8 V18.4 L4.2 9.4Z" fill="#fbfbff"/><path d="M4.2 9.4 L12 18.4 L11 21.6 L4.2 12.9Z" fill="#4a6ade"/><path d="M12 16.6 L21.7 10.6 V13 L12 18.8Z" fill="#d4d8e6"/><path d="M12 18.8 L21.7 13 V16.2 L11 21.6Z" fill="#16349a"/><path d="M4.2 3.2 L21.7 6.9 V16.2 L11 21.6 L4.2 12.9Z" fill="none" stroke="#0a0a14" stroke-width="1.3" stroke-linejoin="round"/></g></svg>
<svg style="left:1137px;top:160px" width="18" height="18" viewBox="0 0 18 18"><ellipse cx="8.6" cy="16.2" rx="6.4" ry="1.6" fill="#b4b8c0"/><circle cx="8" cy="10" r="6.6" fill="url(#gBlue)" stroke="#000a3a" stroke-width="0.5"/><ellipse cx="5.8" cy="7" rx="2" ry="1.3" transform="rotate(-30 5.8 7)" fill="#e8f2ff" opacity="0.9"/><path d="M10 4.4 L14 1.6 L13.4 0.6 L17 1 L16.6 4.6 L15.6 3.6 L12 6.4Z" fill="#fff" stroke="#444" stroke-width="0.7"/></svg>
<svg style="left:1177px;top:160px" width="18" height="18" viewBox="0 0 18 18"><path d="M2.6 13.2 L11.8 3.2 L15 6 L5.8 16.2Z" fill="#f4f4f4" stroke="#333" stroke-width="0.9"/><path d="M8.6 6.6 L11.8 3.2 L15 6 L11.8 9.6Z" fill="#ff5a0a"/><path d="M11.8 3.2 L13.6 1 L16.4 3.4 L15 6Z" fill="#d8d8d8" stroke="#555" stroke-width="0.7"/><path d="M2.6 13.2 L5.8 16.2" stroke="#333" stroke-width="1.6"/></svg>
<svg style="left:1217px;top:160px" width="18" height="18" viewBox="0 0 18 18"><path d="M2 14 V4.4 Q2 3.6 2.8 3.6 H6.4 L7.6 5 H13.2 Q14 5 14 5.8 V7.6 H4.6Z" fill="#f3c544" stroke="#3a2a00" stroke-width="0.9"/><path d="M1.8 14.6 L4.6 7.6 H17 L14 14.6Z" fill="url(#gFold)" stroke="#3a2a00" stroke-width="0.9"/></svg>
<svg style="left:1257px;top:160px" width="18" height="18" viewBox="0 0 18 18"><rect x="2" y="2" width="14" height="13.6" fill="#e8ecf8" stroke="#222" stroke-width="1"/><rect x="2.6" y="2.6" width="12.8" height="2" fill="#3a5ac8"/><circle cx="9" cy="10.4" r="4.8" fill="url(#gHelp)"/><text x="9" y="13.6" text-anchor="middle" font-family="Liberation Serif, serif" font-weight="700" font-size="9" fill="#fff">?</text></svg>
<svg style="left:1297px;top:160px" width="18" height="18" viewBox="0 0 18 18"><path d="M9 1 Q10.2 1 10.2 2.4 Q14 3.6 14 8.6 Q14 12 16.4 13.8 V14.4 H1.6 V13.8 Q4 12 4 8.6 Q4 3.6 7.8 2.4 Q7.8 1 9 1Z" fill="#0a7bff" stroke="#000" stroke-width="1.1"/><path d="M7.2 15 Q9 17.8 10.8 15Z" fill="#0a7bff" stroke="#000" stroke-width="1"/></svg>
<svg style="left:1333px;top:161px" width="18" height="18" viewBox="0 0 18 18"><circle cx="8" cy="8.6" r="4.6" fill="none" stroke="#cdd2de" stroke-width="1.6" stroke-dasharray="2.2 1.4"/><circle cx="8" cy="8.6" r="3.6" fill="none" stroke="#cdd2de" stroke-width="1"/><circle cx="8" cy="8.6" r="1.6" fill="none" stroke="#cdd2de" stroke-width="1"/></svg>
<svg style="left:1056.5px;top:188px" width="18" height="18" viewBox="0 0 18 18"><path d="M4 2.6 H10.6 L14 6 V16.4 H4Z" fill="url(#gPage)" stroke="#000" stroke-width="1.2"/><path d="M10.6 2.6 V6 H14" fill="#fff" stroke="#000" stroke-width="0.9"/></svg>
<svg style="left:1078.5px;top:188px" width="18" height="18" viewBox="0 0 18 18"><path d="M2.6 2.6 H7.4 L10 5.2 V12 H2.6Z" fill="#fff" stroke="#000" stroke-width="1.2"/><path d="M7.4 7 H12 L15 10 V16.4 H7.4Z" fill="url(#gPage)" stroke="#000" stroke-width="1.2"/></svg>
<svg style="left:1102px;top:188px" width="18" height="18" viewBox="0 0 18 18"><path d="M2.4 2.6 L15.6 16.2 M15.6 2.6 L2.4 16.2" stroke="#e81a0a" stroke-width="2.3" fill="none"/></svg>
<svg style="left:1125px;top:188px" width="18" height="18" viewBox="0 0 18 18"><path d="M9 4.4 L15.8 12 H2.2Z" fill="url(#gBlV)" stroke="#0a1a6a" stroke-width="1" stroke-linejoin="round"/></svg>
<svg style="left:1147px;top:188px" width="18" height="18" viewBox="0 0 18 18"><path d="M9 13 L15.8 4.6 H2.2Z" fill="url(#gBlV)" stroke="#0a1a6a" stroke-width="1" stroke-linejoin="round"/></svg>
<svg style="left:1169.5px;top:188px" width="18" height="18" viewBox="0 0 18 18"><path d="M4.6 9 L13.4 2.4 V15.8Z" fill="#9a9a9a" stroke="#8a8a8a" stroke-width="0.8" stroke-linejoin="round"/></svg>
<svg style="left:1193px;top:188px" width="18" height="18" viewBox="0 0 18 18"><path d="M2.4 2.6 Q9 1.2 15.4 2.6 L10.6 9.4 V16 L7.4 14.6 V9.4Z" fill="url(#gBlV)" stroke="#0a1a6a" stroke-width="1" stroke-linejoin="round"/><path d="M13 16.6 L17 12.6 V16.6Z" fill="#000"/></svg>
<svg style="left:1215.5px;top:188px" width="18" height="18" viewBox="0 0 18 18"><path d="M3.6 2.4 H10 L14 6.4 V16 H3.6Z" fill="#b8b8b8" stroke="#9a9a9a" stroke-width="1"/><path d="M10 2.4 V6.4 H14" fill="#d0d0d0" stroke="#9a9a9a" stroke-width="0.8"/><path d="M3.6 16.4 H15" stroke="#9a3aa0" stroke-width="0.8" stroke-dasharray="1 1"/><path d="M14 16.8 L16.4 14.4 V16.8Z" fill="#555"/></svg>
<svg style="left:1238px;top:188px" width="18" height="18" viewBox="0 0 18 18"><path d="M2.2 14.6 L9.4 6.4 L11.8 8.6 L4.8 16.8 Q3.4 17.4 2.4 16.4 Q1.6 15.6 2.2 14.6Z" fill="#1a2a7a" stroke="#000a3a" stroke-width="0.8"/><path d="M6.4 4.6 Q10 0.8 14.6 4.4 L16.4 8.4 L14.6 9.4 L13.4 7 Q12 6 10.8 7.2 L8.6 5.2Z" fill="#2a2a2a" stroke="#000" stroke-width="0.8"/><path d="M11.6 5.2 L14.2 6.2 L15.4 8.6" fill="none" stroke="#d8d8d8" stroke-width="1"/><path d="M13.6 17 L17.4 13.2 V17Z" fill="#000"/></svg>
<svg style="left:1261px;top:188px" width="18" height="18" viewBox="0 0 18 18"><circle cx="9" cy="9" r="7" fill="url(#gHelp)" stroke="#10207a" stroke-width="0.5"/><text x="9" y="13.6" text-anchor="middle" font-family="Liberation Serif, serif" font-weight="700" font-size="13" fill="#fff">?</text></svg>
<svg style="left:1278px;top:239px" width="11" height="14" viewBox="0 0 10 14"><path d="M5 0.9 Q8.8 0.9 8.8 4.6 Q8.8 6.4 7.4 7.8 Q6.8 8.6 6.8 9.4 H3.2 Q3.2 8.6 2.6 7.8 Q1.2 6.4 1.2 4.6 Q1.2 0.9 5 0.9Z" fill="#ffdf70" stroke="#6a3c00" stroke-width="0.9"/><path d="M3.2 9.4 H6.8 V11 Q6.8 12.2 5 12.2 Q3.2 12.2 3.2 11Z" fill="#f5a000" stroke="#6a3c00" stroke-width="0.8"/><path d="M3.4 3.6 Q3.8 2.4 5 2.2" fill="none" stroke="#fff" stroke-width="1"/></svg>
<svg style="left:1294px;top:239px" width="14" height="14" viewBox="0 0 13 14"><path d="M7 6.6 V3.8 Q7 1.2 9.4 1.2 Q11.8 1.2 11.8 3.8 V4.6" fill="none" stroke="#222" stroke-width="1.2"/><rect x="1.4" y="6" width="7.8" height="6.4" fill="#ffe25a" stroke="#3a2a00" stroke-width="1"/></svg>
<svg style="left:1278px;top:258px" width="11" height="14" viewBox="0 0 10 14"><path d="M5 0.9 Q8.8 0.9 8.8 4.6 Q8.8 6.4 7.4 7.8 Q6.8 8.6 6.8 9.4 H3.2 Q3.2 8.6 2.6 7.8 Q1.2 6.4 1.2 4.6 Q1.2 0.9 5 0.9Z" fill="#ffdf70" stroke="#6a3c00" stroke-width="0.9"/><path d="M3.2 9.4 H6.8 V11 Q6.8 12.2 5 12.2 Q3.2 12.2 3.2 11Z" fill="#f5a000" stroke="#6a3c00" stroke-width="0.8"/><path d="M3.4 3.6 Q3.8 2.4 5 2.2" fill="none" stroke="#fff" stroke-width="1"/></svg>
<svg style="left:1294px;top:258px" width="14" height="14" viewBox="0 0 13 14"><path d="M7 6.6 V3.8 Q7 1.2 9.4 1.2 Q11.8 1.2 11.8 3.8 V4.6" fill="none" stroke="#222" stroke-width="1.2"/><rect x="1.4" y="6" width="7.8" height="6.4" fill="#ffe25a" stroke="#3a2a00" stroke-width="1"/></svg>
<svg style="left:1278px;top:296px" width="11" height="14" viewBox="0 0 10 14"><path d="M5 0.9 Q8.8 0.9 8.8 4.6 Q8.8 6.4 7.4 7.8 Q6.8 8.6 6.8 9.4 H3.2 Q3.2 8.6 2.6 7.8 Q1.2 6.4 1.2 4.6 Q1.2 0.9 5 0.9Z" fill="#ffdf70" stroke="#6a3c00" stroke-width="0.9"/><path d="M3.2 9.4 H6.8 V11 Q6.8 12.2 5 12.2 Q3.2 12.2 3.2 11Z" fill="#f5a000" stroke="#6a3c00" stroke-width="0.8"/><path d="M3.4 3.6 Q3.8 2.4 5 2.2" fill="none" stroke="#fff" stroke-width="1"/></svg>
<svg style="left:1294px;top:296px" width="14" height="14" viewBox="0 0 13 14"><path d="M7 6.6 V3.8 Q7 1.2 9.4 1.2 Q11.8 1.2 11.8 3.8 V4.6" fill="none" stroke="#222" stroke-width="1.2"/><rect x="1.4" y="6" width="7.8" height="6.4" fill="#ffe25a" stroke="#3a2a00" stroke-width="1"/></svg>
<svg style="left:1278px;top:315px" width="11" height="14" viewBox="0 0 10 14"><path d="M5 0.9 Q8.8 0.9 8.8 4.6 Q8.8 6.4 7.4 7.8 Q6.8 8.6 6.8 9.4 H3.2 Q3.2 8.6 2.6 7.8 Q1.2 6.4 1.2 4.6 Q1.2 0.9 5 0.9Z" fill="#ffdf70" stroke="#6a3c00" stroke-width="0.9"/><path d="M3.2 9.4 H6.8 V11 Q6.8 12.2 5 12.2 Q3.2 12.2 3.2 11Z" fill="#f5a000" stroke="#6a3c00" stroke-width="0.8"/><path d="M3.4 3.6 Q3.8 2.4 5 2.2" fill="none" stroke="#fff" stroke-width="1"/></svg>
<svg style="left:1294px;top:315px" width="14" height="14" viewBox="0 0 13 14"><path d="M7 6.6 V3.8 Q7 1.2 9.4 1.2 Q11.8 1.2 11.8 3.8 V4.6" fill="none" stroke="#222" stroke-width="1.2"/><rect x="1.4" y="6" width="7.8" height="6.4" fill="#ffe25a" stroke="#3a2a00" stroke-width="1"/></svg>
<svg style="left:1278px;top:334px" width="11" height="14" viewBox="0 0 10 14"><path d="M5 0.9 Q8.8 0.9 8.8 4.6 Q8.8 6.4 7.4 7.8 Q6.8 8.6 6.8 9.4 H3.2 Q3.2 8.6 2.6 7.8 Q1.2 6.4 1.2 4.6 Q1.2 0.9 5 0.9Z" fill="#ffdf70" stroke="#6a3c00" stroke-width="0.9"/><path d="M3.2 9.4 H6.8 V11 Q6.8 12.2 5 12.2 Q3.2 12.2 3.2 11Z" fill="#f5a000" stroke="#6a3c00" stroke-width="0.8"/><path d="M3.4 3.6 Q3.8 2.4 5 2.2" fill="none" stroke="#fff" stroke-width="1"/></svg>
<svg style="left:1294px;top:334px" width="14" height="14" viewBox="0 0 13 14"><path d="M7 6.6 V3.8 Q7 1.2 9.4 1.2 Q11.8 1.2 11.8 3.8 V4.6" fill="none" stroke="#222" stroke-width="1.2"/><rect x="1.4" y="6" width="7.8" height="6.4" fill="#ffe25a" stroke="#3a2a00" stroke-width="1"/></svg>
<svg style="left:1278px;top:353px" width="11" height="14" viewBox="0 0 10 14"><path d="M5 0.9 Q8.8 0.9 8.8 4.6 Q8.8 6.4 7.4 7.8 Q6.8 8.6 6.8 9.4 H3.2 Q3.2 8.6 2.6 7.8 Q1.2 6.4 1.2 4.6 Q1.2 0.9 5 0.9Z" fill="#ffdf70" stroke="#6a3c00" stroke-width="0.9"/><path d="M3.2 9.4 H6.8 V11 Q6.8 12.2 5 12.2 Q3.2 12.2 3.2 11Z" fill="#f5a000" stroke="#6a3c00" stroke-width="0.8"/><path d="M3.4 3.6 Q3.8 2.4 5 2.2" fill="none" stroke="#fff" stroke-width="1"/></svg>
<svg style="left:1294px;top:353px" width="14" height="14" viewBox="0 0 13 14"><path d="M7 6.6 V3.8 Q7 1.2 9.4 1.2 Q11.8 1.2 11.8 3.8 V4.6" fill="none" stroke="#222" stroke-width="1.2"/><rect x="1.4" y="6" width="7.8" height="6.4" fill="#ffe25a" stroke="#3a2a00" stroke-width="1"/></svg>
<svg style="left:1278px;top:372px" width="11" height="14" viewBox="0 0 10 14"><path d="M5 0.9 Q8.8 0.9 8.8 4.6 Q8.8 6.4 7.4 7.8 Q6.8 8.6 6.8 9.4 H3.2 Q3.2 8.6 2.6 7.8 Q1.2 6.4 1.2 4.6 Q1.2 0.9 5 0.9Z" fill="#ffdf70" stroke="#6a3c00" stroke-width="0.9"/><path d="M3.2 9.4 H6.8 V11 Q6.8 12.2 5 12.2 Q3.2 12.2 3.2 11Z" fill="#f5a000" stroke="#6a3c00" stroke-width="0.8"/><path d="M3.4 3.6 Q3.8 2.4 5 2.2" fill="none" stroke="#fff" stroke-width="1"/></svg>
<svg style="left:1294px;top:372px" width="14" height="14" viewBox="0 0 13 14"><path d="M7 6.6 V3.8 Q7 1.2 9.4 1.2 Q11.8 1.2 11.8 3.8 V4.6" fill="none" stroke="#222" stroke-width="1.2"/><rect x="1.4" y="6" width="7.8" height="6.4" fill="#ffe25a" stroke="#3a2a00" stroke-width="1"/></svg>
<svg style="left:1278px;top:391px" width="11" height="14" viewBox="0 0 10 14"><path d="M5 0.9 Q8.8 0.9 8.8 4.6 Q8.8 6.4 7.4 7.8 Q6.8 8.6 6.8 9.4 H3.2 Q3.2 8.6 2.6 7.8 Q1.2 6.4 1.2 4.6 Q1.2 0.9 5 0.9Z" fill="#ffdf70" stroke="#6a3c00" stroke-width="0.9"/><path d="M3.2 9.4 H6.8 V11 Q6.8 12.2 5 12.2 Q3.2 12.2 3.2 11Z" fill="#f5a000" stroke="#6a3c00" stroke-width="0.8"/><path d="M3.4 3.6 Q3.8 2.4 5 2.2" fill="none" stroke="#fff" stroke-width="1"/></svg>
<svg style="left:1294px;top:391px" width="14" height="14" viewBox="0 0 13 14"><path d="M7 6.6 V3.8 Q7 1.2 9.4 1.2 Q11.8 1.2 11.8 3.8 V4.6" fill="none" stroke="#222" stroke-width="1.2"/><rect x="1.4" y="6" width="7.8" height="6.4" fill="#ffe25a" stroke="#3a2a00" stroke-width="1"/></svg>
<svg style="left:1278px;top:410px" width="11" height="14" viewBox="0 0 10 14"><path d="M5 0.9 Q8.8 0.9 8.8 4.6 Q8.8 6.4 7.4 7.8 Q6.8 8.6 6.8 9.4 H3.2 Q3.2 8.6 2.6 7.8 Q1.2 6.4 1.2 4.6 Q1.2 0.9 5 0.9Z" fill="#ffdf70" stroke="#6a3c00" stroke-width="0.9"/><path d="M3.2 9.4 H6.8 V11 Q6.8 12.2 5 12.2 Q3.2 12.2 3.2 11Z" fill="#f5a000" stroke="#6a3c00" stroke-width="0.8"/><path d="M3.4 3.6 Q3.8 2.4 5 2.2" fill="none" stroke="#fff" stroke-width="1"/></svg>
<svg style="left:1294px;top:410px" width="14" height="14" viewBox="0 0 13 14"><path d="M7 6.6 V3.8 Q7 1.2 9.4 1.2 Q11.8 1.2 11.8 3.8 V4.6" fill="none" stroke="#222" stroke-width="1.2"/><rect x="1.4" y="6" width="7.8" height="6.4" fill="#ffe25a" stroke="#3a2a00" stroke-width="1"/></svg>

<span class="t" style="left:31.2px;top:8.1px;font-size:12px;letter-spacing:-0.104px;color:#111">dxf_tutorial_basic.3dm</span>
<span class="t" style="left:8.3px;top:33.2px;font-size:11.5px;letter-spacing:-0.283px;color:#484848">File</span>
<span class="t" style="left:40.3px;top:33.2px;font-size:11.5px;letter-spacing:-0.057px;color:#484848">Edit</span>
<span class="t" style="left:74.2px;top:33.2px;font-size:11.5px;letter-spacing:0.120px;color:#484848">View</span>
<span class="t" style="left:113.2px;top:33.2px;font-size:11.5px;letter-spacing:0.062px;color:#484848">Curve</span>
<span class="t" style="left:158.0px;top:33.2px;font-size:11.5px;letter-spacing:-0.092px;color:#484848">Surface</span>
<span class="t" style="left:211.4px;top:33.2px;font-size:11.5px;letter-spacing:-0.395px;color:#484848">SubD</span>
<span class="t" style="left:252.9px;top:33.2px;font-size:11.5px;letter-spacing:0.064px;color:#484848">Solid</span>
<span class="t" style="left:293.2px;top:33.2px;font-size:11.5px;letter-spacing:0.069px;color:#484848">Mesh</span>
<span class="t" style="left:336.3px;top:33.2px;font-size:11.5px;letter-spacing:0.208px;color:#484848">Dimension</span>
<span class="t" style="left:407.3px;top:33.2px;font-size:11.5px;letter-spacing:-0.009px;color:#484848">Transform</span>
<span class="t" style="left:474.6px;top:33.2px;font-size:11.5px;letter-spacing:-0.172px;color:#484848">Tools</span>
<span class="t" style="left:515.4px;top:33.2px;font-size:11.5px;letter-spacing:-0.046px;color:#484848">Analyze</span>
<span class="t" style="left:570.2px;top:33.2px;font-size:11.5px;letter-spacing:-0.220px;color:#484848">Render</span>
<span class="t" style="left:621.4px;top:33.2px;font-size:11.5px;letter-spacing:-0.329px;color:#484848">Panels</span>
<span class="t" style="left:669.4px;top:33.2px;font-size:11.5px;letter-spacing:0.136px;color:#484848">Help</span>
<span class="t" style="left:9.0px;top:55.8px;font-size:11.5px;letter-spacing:-0.133px;color:#000;font-weight:700">Command:</span>
<span class="t" style="left:18.4px;top:82.8px;font-size:11.5px;letter-spacing:-0.048px;color:#222">Standard</span>
<span class="t" style="left:86.8px;top:82.8px;font-size:11.5px;letter-spacing:-0.353px;color:#222">CPlanes</span>
<span class="t" style="left:150.2px;top:82.8px;font-size:11.5px;letter-spacing:-0.261px;color:#222">Set View</span>
<span class="t" style="left:214.4px;top:82.8px;font-size:11.5px;letter-spacing:-0.074px;color:#222">Display</span>
<span class="t" style="left:273.0px;top:82.8px;font-size:11.5px;letter-spacing:-0.161px;color:#222">Select</span>
<span class="t" style="left:326.5px;top:82.8px;font-size:11.5px;letter-spacing:0.202px;color:#222">Viewport Layout</span>
<span class="t" style="left:432.5px;top:82.8px;font-size:11.5px;letter-spacing:0.157px;color:#222">Visibility</span>
<span class="t" style="left:497.6px;top:82.8px;font-size:11.5px;letter-spacing:-0.009px;color:#222">Transform</span>
<span class="t" style="left:572.3px;top:82.8px;font-size:11.5px;letter-spacing:0.017px;color:#222">Curve Tools</span>
<span class="t" style="left:653.3px;top:82.8px;font-size:11.5px;letter-spacing:0.010px;color:#222">Surface Tools</span>
<span class="t" style="left:743.6px;top:82.8px;font-size:11.5px;letter-spacing:0.081px;color:#222">Solid Tools</span>
<span class="t" style="left:820.6px;top:82.8px;font-size:11.5px;letter-spacing:-0.031px;color:#222">SubD Tools</span>
<span class="t" style="left:899.7px;top:82.8px;font-size:11.5px;letter-spacing:0.093px;color:#222">Mesh Tools</span>
<span class="t" style="left:979.3px;top:82.8px;font-size:11.5px;letter-spacing:0.003px;color:#222">Render Tools</span>
<span class="t" style="left:1068.6px;top:82.8px;font-size:11.5px;letter-spacing:0.265px;color:#222">Drafting</span>
<span class="t" style="left:1131.3px;top:82.8px;font-size:11.5px;letter-spacing:0.042px;color:#222">New in V7</span>
<span class="t" style="left:73.5px;top:140.0px;font-size:11.5px;letter-spacing:0.089px;color:#2a2a30;font-weight:700">Top</span>
<span class="t" style="left:75.5px;top:841.0px;font-size:11.5px;letter-spacing:-0.054px;color:#222">Perspective</span>
<span class="t" style="left:149.8px;top:841.0px;font-size:11.5px;letter-spacing:0.018px;color:#222">Top</span>
<span class="t" style="left:184.4px;top:841.0px;font-size:11.5px;letter-spacing:0.111px;color:#222">Front</span>
<span class="t" style="left:227.8px;top:841.0px;font-size:11.5px;letter-spacing:0.048px;color:#222">Right</span>
<span class="t" style="left:26.4px;top:867.0px;font-size:11.5px;letter-spacing:-0.523px;color:#222">End</span>
<span class="t" style="left:69.5px;top:867.0px;font-size:11.5px;letter-spacing:-0.084px;color:#222">Near</span>
<span class="t" style="left:117.3px;top:867.0px;font-size:11.5px;letter-spacing:0.296px;color:#222">Point</span>
<span class="t" style="left:168.9px;top:867.0px;font-size:11.5px;letter-spacing:0.256px;color:#222">Mid</span>
<span class="t" style="left:212.9px;top:867.0px;font-size:11.5px;letter-spacing:-0.603px;color:#222">Cen</span>
<span class="t" style="left:256.6px;top:867.0px;font-size:11.5px;letter-spacing:0.201px;color:#222">Int</span>
<span class="t" style="left:294.0px;top:867.0px;font-size:11.5px;letter-spacing:-0.424px;color:#222">Perp</span>
<span class="t" style="left:340.6px;top:867.0px;font-size:11.5px;letter-spacing:-0.616px;color:#222">Tan</span>
<span class="t" style="left:382.8px;top:867.0px;font-size:11.5px;letter-spacing:-0.135px;color:#222">Quad</span>
<span class="t" style="left:434.8px;top:867.0px;font-size:11.5px;letter-spacing:0.007px;color:#222">Knot</span>
<span class="t" style="left:482.7px;top:867.0px;font-size:11.5px;letter-spacing:-0.402px;color:#222">Vertex</span>
<span class="t" style="left:538.6px;top:867.0px;font-size:11.5px;letter-spacing:0.100px;color:#222">Project</span>
<span class="t" style="left:606.6px;top:867.0px;font-size:11.5px;letter-spacing:-0.151px;color:#222">Disable</span>
<span class="t" style="left:7.5px;top:888.0px;font-size:11.5px;letter-spacing:-0.203px;color:#222">CPlane</span>
<span class="t" style="left:80.0px;top:888.0px;font-size:11.5px;letter-spacing:-0.221px;color:#222">x 6.34</span>
<span class="t" style="left:168.9px;top:888.0px;font-size:11.5px;letter-spacing:-0.405px;color:#222">y 1.87</span>
<span class="t" style="left:267.8px;top:888.0px;font-size:11.5px;letter-spacing:-0.850px;color:#222">z</span>
<span class="t" style="left:341.6px;top:888.0px;font-size:11.5px;letter-spacing:-0.009px;color:#222">Meters</span>
<span class="t" style="left:422.7px;top:888.0px;font-size:11.5px;letter-spacing:0.013px;color:#222">door_external</span>
<span class="t" style="left:578.9px;top:888.0px;font-size:11.5px;letter-spacing:-0.298px;color:#222">Grid Snap</span>
<span class="t" style="left:643.9px;top:888.0px;font-size:11.5px;letter-spacing:0.247px;color:#222">Ortho</span>
<span class="t" style="left:689.0px;top:888.0px;font-size:11.5px;letter-spacing:-0.175px;color:#222">Planar</span>
<span class="t" style="left:735.2px;top:888.0px;font-size:11.5px;letter-spacing:-0.359px;color:#222;font-weight:700">Osnap</span>
<span class="t" style="left:783.0px;top:888.0px;font-size:11.5px;letter-spacing:-0.100px;color:#222">SmartTrack</span>
<span class="t" style="left:855.3px;top:888.0px;font-size:11.5px;letter-spacing:-0.088px;color:#222;font-weight:700">Gumball</span>
<span class="t" style="left:915.8px;top:888.0px;font-size:11.5px;letter-spacing:0.110px;color:#222">Record History</span>
<span class="t" style="left:1008.0px;top:888.0px;font-size:11.5px;letter-spacing:-0.060px;color:#222">Filter</span>
<span class="t" style="left:1041.4px;top:888.0px;font-size:11.5px;letter-spacing:0.113px;color:#222">Available physical memory: 4901 MB</span>
<span class="t" style="left:1051.5px;top:141.0px;font-size:11.5px;letter-spacing:-0.389px;color:#666b76">Layers</span>
<span class="t" style="left:1054.5px;top:217.0px;font-size:11.5px;letter-spacing:-0.276px;color:#222">Layer</span>
<span class="t" style="left:1332.4px;top:217.0px;font-size:11.5px;letter-spacing:-0.192px;color:#222">Ma</span>
<span class="t" style="left:1057.3px;top:239.0px;font-size:12px;letter-spacing:-0.717px;color:#111">EXISTING FLOOR-PLAN</span>
<span class="t" style="left:1057.3px;top:258.0px;font-size:12px;letter-spacing:0.033px;color:#111">internal_polygon</span>
<span class="t" style="left:1057.3px;top:277.0px;font-size:12px;letter-spacing:-0.174px;color:#111;font-weight:700">door_external</span>
<span class="t" style="left:1057.3px;top:296.0px;font-size:12px;letter-spacing:-0.053px;color:#111">window_external</span>
<span class="t" style="left:1057.3px;top:315.0px;font-size:12px;letter-spacing:0.045px;color:#111">window_skylight</span>
<span class="t" style="left:1057.3px;top:334.0px;font-size:12px;letter-spacing:-0.123px;color:#111">entrance_primary</span>
<span class="t" style="left:1057.3px;top:353.0px;font-size:12px;letter-spacing:-0.153px;color:#111">wall_external_structural</span>
<span class="t" style="left:1057.3px;top:372.0px;font-size:12px;letter-spacing:-0.097px;color:#111">wall_internal_structural</span>
<span class="t" style="left:1057.3px;top:391.0px;font-size:12px;letter-spacing:0.092px;color:#111">door_outdoor</span>
<span class="t" style="left:1057.3px;top:410.0px;font-size:12px;letter-spacing:-0.087px;color:#111">decorative</span>
<span class="t" style="left:105.2px;top:758.0px;font-size:11.5px;letter-spacing:0.050px;color:#565a62">y</span>
<span class="t" style="left:135.2px;top:789.6px;font-size:11.5px;letter-spacing:-0.050px;color:#565a62">x</span>
<div class="a" style="left:1346px;top:214px;width:2px;height:23px;background:#e6eaf4;"></div>
</div>
</body></html>
